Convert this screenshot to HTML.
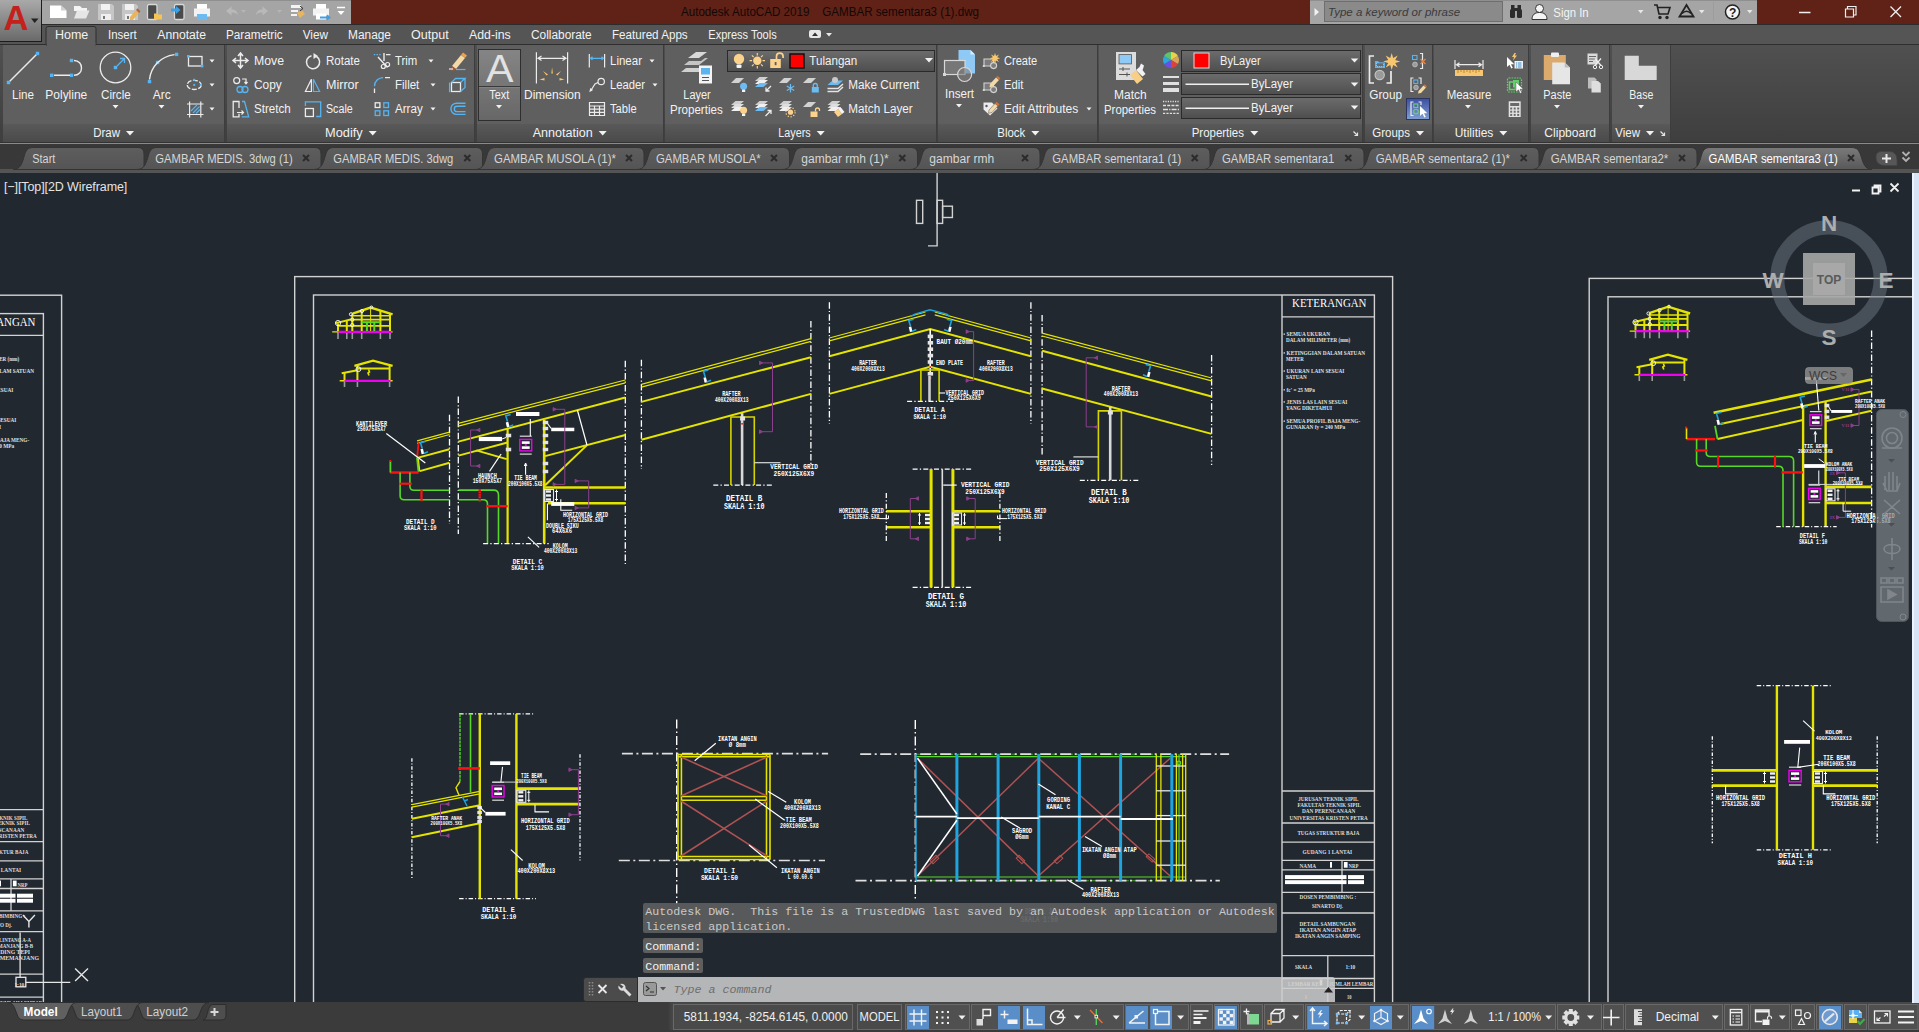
<!DOCTYPE html>
<html lang="en">
<head>
<meta charset="utf-8">
<title>Autodesk AutoCAD 2019 GAMBAR sementara3 (1).dwg</title>
<style>
*{box-sizing:border-box;margin:0;padding:0}
html,body{width:1919px;height:1032px;overflow:hidden;background:#212830}
body{position:relative;font-family:"Liberation Sans",sans-serif;font-size:12px;color:#e6e6e6}
.abs{position:absolute}
.t{position:absolute;white-space:nowrap;line-height:14px;height:14px;color:#f0f0f0;font-size:12.5px}
.tc{transform:translateX(-50%)}
#titlebar{position:absolute;left:0;top:0;width:1919px;height:25px;background:#602216;border-bottom:1px solid #2c2c2c}
#qat{position:absolute;left:42px;top:0;width:309px;height:24px;background:#a5a5a5;border-top:1px solid #8f8f8f}
#appbtn{position:absolute;left:0;top:0;width:42px;height:42px;background:linear-gradient(#a9a9a9,#6a6a6a);border:1px solid #1c1c1c;border-top:none;border-left:none}
#search{position:absolute;left:1310px;top:0;width:447px;height:24px;background:#a5a5a5;border-top:1px solid #8f8f8f}
#searchin{position:absolute;left:1324px;top:1px;width:179px;height:21px;background:#8a8a8a;border:1px solid #6e6e6e;color:#3a3a3a;font-style:italic;font-size:11.5px;line-height:21px;padding-left:3px}
#tabrow{position:absolute;left:0;top:25px;width:1919px;height:20px;background:#555}
#ribbon{position:absolute;left:0;top:44px;width:1919px;height:100px;background:linear-gradient(#505050,#3e3e3e);border-top:1px solid #2e2e2e}
.panel{position:absolute;top:45px;height:97px;background:#5f5f5f;border-right:1px solid #3d3d3d}
.ptitle{position:absolute;left:0;right:0;bottom:0;height:18px;background:linear-gradient(#595959,#4a4a4a)}
#ribbot{position:absolute;left:0;top:142px;width:1919px;height:5px;background:#383838;border-top:1px solid #333}#ribbot:after{content:'';position:absolute;left:0;top:0;width:1919px;height:1px;background:#8a8a8a}
#filetabs{position:absolute;left:0;top:145px;width:1919px;height:25px;background:#383838}
.ft{position:absolute;top:148px;height:20px;background:#535353;border-radius:9px 9px 0 0;transform:skewX(0deg)}
.ft.act{background:#616161}
#status{position:absolute;left:0;top:1002px;width:1919px;height:30px;background:linear-gradient(90deg,#3b3b3b 0,#3b3b3b 668px,#474747 672px);border-bottom:2px solid #3a3a3a}
.sb{position:absolute;top:1004px;height:26px;background:#4e4e4e;border:1px solid #2b2b2b}
.sbon{position:absolute;top:1006px;height:22px;background:#5b8fc7}
</style>
</head>
<body>
<div id="titlebar"></div>
<div id="qat"></div>
<div id="search"></div><div id="searchin">Type a keyword or phrase</div>
<div id="tabrow"></div>
<div id="ribbon"></div>
<div id="ribbot"></div>
<div id="filetabs"></div>
<div id="status"></div>
<div id="appbtn"></div>
<svg class="abs" style="left:0;top:173px" width="1919" height="829" viewBox="0 173 1919 829">
<style>.c{font-family:"Liberation Mono","DejaVu Sans Mono",monospace;font-weight:bold}.s{font-family:"Liberation Serif",serif;font-weight:bold}</style>
<g transform="translate(0 0)">
<rect x="294.7" y="276.6" width="1097.9" height="823.4" fill="none" stroke="#d2d2d2" stroke-width="1.4"/>
<rect x="313.5" y="295.0" width="1060.9" height="805.0" fill="none" stroke="#d2d2d2" stroke-width="1.4"/>
<path d="M1282.0 295.0L1282.0 1100.0" stroke="#d2d2d2" stroke-width="1.4" fill="none"/>
<path d="M1282.0 316.8L1374.4 316.8" stroke="#d2d2d2" stroke-width="1.3" fill="none"/>
<path d="M1282.0 791.0L1374.4 791.0" stroke="#d2d2d2" stroke-width="1.3" fill="none"/>
<path d="M1282.0 823.0L1374.4 823.0" stroke="#d2d2d2" stroke-width="1.3" fill="none"/>
<path d="M1282.0 842.2L1374.4 842.2" stroke="#d2d2d2" stroke-width="1.3" fill="none"/>
<path d="M1282.0 860.3L1374.4 860.3" stroke="#d2d2d2" stroke-width="1.3" fill="none"/>
<path d="M1282.0 869.9L1374.4 869.9" stroke="#d2d2d2" stroke-width="1.3" fill="none"/>
<path d="M1282.0 892.3L1374.4 892.3" stroke="#d2d2d2" stroke-width="1.3" fill="none"/>
<path d="M1282.0 913.0L1374.4 913.0" stroke="#d2d2d2" stroke-width="1.3" fill="none"/>
<path d="M1282.0 955.6L1374.4 955.6" stroke="#d2d2d2" stroke-width="1.3" fill="none"/>
<path d="M1282.0 978.5L1374.4 978.5" stroke="#d2d2d2" stroke-width="1.3" fill="none"/>
<path d="M1282.0 988.3L1374.4 988.3" stroke="#d2d2d2" stroke-width="1.3" fill="none"/>
<path d="M1342.0 860.3L1342.0 892.3" stroke="#d2d2d2" stroke-width="1.3" fill="none"/>
<path d="M1327.8 955.6L1327.8 1100.0" stroke="#d2d2d2" stroke-width="1.3" fill="none"/>
<text class="s" x="1292.1" y="307.2" font-size="12.5" textLength="74.4" lengthAdjust="spacingAndGlyphs" fill="#ffffff" style="font-weight:normal">KETERANGAN</text>
<text class="s" x="1286.6" y="336.1" font-size="5.6" textLength="43.4" lengthAdjust="spacingAndGlyphs" fill="#e0e0e0">SEMUA UKURAN</text>
<text class="s" x="1286.0" y="342.0" font-size="5.6" textLength="64.3" lengthAdjust="spacingAndGlyphs" fill="#e0e0e0">DALAM MILIMETER (mm)</text>
<text class="s" x="1286.6" y="354.9" font-size="5.6" textLength="78.4" lengthAdjust="spacingAndGlyphs" fill="#e0e0e0">KETINGGIAN DALAM SATUAN</text>
<text class="s" x="1286.0" y="361.2" font-size="5.6" textLength="17.9" lengthAdjust="spacingAndGlyphs" fill="#e0e0e0">METER</text>
<text class="s" x="1286.6" y="373.0" font-size="5.6" textLength="57.8" lengthAdjust="spacingAndGlyphs" fill="#e0e0e0">UKURAN LAIN SESUAI</text>
<text class="s" x="1286.0" y="379.2" font-size="5.6" textLength="20.8" lengthAdjust="spacingAndGlyphs" fill="#e0e0e0">SATUAN</text>
<text class="s" x="1286.6" y="391.8" font-size="5.6" textLength="28.3" lengthAdjust="spacingAndGlyphs" fill="#e0e0e0">fc' = 25 MPa</text>
<text class="s" x="1286.6" y="403.9" font-size="5.6" textLength="60.7" lengthAdjust="spacingAndGlyphs" fill="#e0e0e0">JENIS LAS LAIN SESUAI</text>
<text class="s" x="1286.0" y="410.2" font-size="5.6" textLength="45.9" lengthAdjust="spacingAndGlyphs" fill="#e0e0e0">YANG DIKETAHUI</text>
<text class="s" x="1286.6" y="423.1" font-size="5.6" textLength="73.6" lengthAdjust="spacingAndGlyphs" fill="#e0e0e0">SEMUA PROFIL BAJA MENG-</text>
<text class="s" x="1286.0" y="429.0" font-size="5.6" textLength="59.1" lengthAdjust="spacingAndGlyphs" fill="#e0e0e0">GUNAKAN fy = 240 MPa</text>
<rect x="1283.5" y="333.5" width="1.5" height="1.3" fill="#cfcfcf"/>
<rect x="1283.5" y="352.3" width="1.5" height="1.3" fill="#cfcfcf"/>
<rect x="1283.5" y="370.4" width="1.5" height="1.3" fill="#cfcfcf"/>
<rect x="1283.5" y="389.2" width="1.5" height="1.3" fill="#cfcfcf"/>
<rect x="1283.5" y="401.3" width="1.5" height="1.3" fill="#cfcfcf"/>
<rect x="1283.5" y="420.5" width="1.5" height="1.3" fill="#cfcfcf"/>
<text class="s" x="1298.3" y="801.0" font-size="5.4" textLength="60.1" lengthAdjust="spacingAndGlyphs" fill="#dedede">JURUSAN TEKNIK SIPIL</text>
<text class="s" x="1297.4" y="806.9" font-size="5.4" textLength="63.5" lengthAdjust="spacingAndGlyphs" fill="#dedede">FAKULTAS TEKNIK SIPIL</text>
<text class="s" x="1302.0" y="813.1" font-size="5.4" textLength="53.3" lengthAdjust="spacingAndGlyphs" fill="#dedede">DAN PERENCANAAN</text>
<text class="s" x="1289.6" y="819.7" font-size="5.4" textLength="78.2" lengthAdjust="spacingAndGlyphs" fill="#dedede">UNIVERSITAS KRISTEN PETRA</text>
<text class="s" x="1297.4" y="835.2" font-size="5.4" textLength="62.0" lengthAdjust="spacingAndGlyphs" fill="#dedede">TUGAS STRUKTUR BAJA</text>
<text class="s" x="1302.6" y="853.8" font-size="5.4" textLength="49.6" lengthAdjust="spacingAndGlyphs" fill="#dedede">GUDANG 1 LANTAI</text>
<text class="s" x="1299.5" y="868.0" font-size="5.4" textLength="16.5" lengthAdjust="spacingAndGlyphs" fill="#dedede">NAMA</text>
<text class="s" x="1348.5" y="868.0" font-size="5.4" textLength="9.9" lengthAdjust="spacingAndGlyphs" fill="#dedede">NRP</text>
<text class="s" x="1299.5" y="899.0" font-size="5.4" textLength="56.8" lengthAdjust="spacingAndGlyphs" fill="#dedede">DOSEN PEMBIMBING :</text>
<text class="s" x="1311.9" y="908.0" font-size="5.4" textLength="31.1" lengthAdjust="spacingAndGlyphs" fill="#dedede">SINARTO Dj.</text>
<text class="s" x="1299.5" y="926.0" font-size="5.4" textLength="55.8" lengthAdjust="spacingAndGlyphs" fill="#dedede">DETAIL SAMBUNGAN</text>
<text class="s" x="1299.5" y="932.2" font-size="5.4" textLength="56.8" lengthAdjust="spacingAndGlyphs" fill="#dedede">IKATAN ANGIN ATAP</text>
<text class="s" x="1294.9" y="938.1" font-size="5.4" textLength="65.4" lengthAdjust="spacingAndGlyphs" fill="#dedede">IKATAN ANGIN SAMPING</text>
<text class="s" x="1294.9" y="968.8" font-size="5.4" textLength="17.3" lengthAdjust="spacingAndGlyphs" fill="#dedede">SKALA</text>
<text class="s" x="1345.4" y="968.8" font-size="5.4" textLength="9.9" lengthAdjust="spacingAndGlyphs" fill="#dedede">1:10</text>
<text class="s" x="1288.0" y="986.1" font-size="5.4" textLength="31.0" lengthAdjust="spacingAndGlyphs" fill="#dedede">LEMBAR KE</text>
<text class="s" x="1329.3" y="986.1" font-size="5.4" textLength="44.0" lengthAdjust="spacingAndGlyphs" fill="#dedede">JUMLAH LEMBAR</text>
<text class="s" x="1305.0" y="998.9" font-size="5.4" textLength="2.0" lengthAdjust="spacingAndGlyphs" fill="#dedede">1</text>
<text class="s" x="1347.0" y="998.9" font-size="5.4" textLength="4.5" lengthAdjust="spacingAndGlyphs" fill="#dedede">10</text>
<rect x="1285.0" y="875.1" width="61.5" height="4.0" fill="#ffffff"/>
<rect x="1348.0" y="875.1" width="16.0" height="4.0" fill="#ffffff"/>
<rect x="1285.0" y="880.2" width="61.5" height="3.9" fill="#ffffff"/>
<rect x="1348.0" y="880.2" width="16.0" height="3.9" fill="#ffffff"/>
<rect x="1330.0" y="862.0" width="2.0" height="5.7" fill="#ffffff"/>
<rect x="1343.9" y="862.0" width="3.7" height="5.7" fill="#ffffff"/>
<rect x="1319.7" y="979.6" width="2.6" height="5.9" fill="#ffffff"/>
</g>
<g transform="translate(-1331 18.6)">
<rect x="294.7" y="276.6" width="1097.9" height="823.4" fill="none" stroke="#d2d2d2" stroke-width="1.4"/>
<rect x="313.5" y="295.0" width="1060.9" height="805.0" fill="none" stroke="#d2d2d2" stroke-width="1.4"/>
<path d="M1282.0 295.0L1282.0 1100.0" stroke="#d2d2d2" stroke-width="1.4" fill="none"/>
<path d="M1282.0 316.8L1374.4 316.8" stroke="#d2d2d2" stroke-width="1.3" fill="none"/>
<path d="M1282.0 791.0L1374.4 791.0" stroke="#d2d2d2" stroke-width="1.3" fill="none"/>
<path d="M1282.0 823.0L1374.4 823.0" stroke="#d2d2d2" stroke-width="1.3" fill="none"/>
<path d="M1282.0 842.2L1374.4 842.2" stroke="#d2d2d2" stroke-width="1.3" fill="none"/>
<path d="M1282.0 860.3L1374.4 860.3" stroke="#d2d2d2" stroke-width="1.3" fill="none"/>
<path d="M1282.0 869.9L1374.4 869.9" stroke="#d2d2d2" stroke-width="1.3" fill="none"/>
<path d="M1282.0 892.3L1374.4 892.3" stroke="#d2d2d2" stroke-width="1.3" fill="none"/>
<path d="M1282.0 913.0L1374.4 913.0" stroke="#d2d2d2" stroke-width="1.3" fill="none"/>
<path d="M1282.0 955.6L1374.4 955.6" stroke="#d2d2d2" stroke-width="1.3" fill="none"/>
<path d="M1282.0 978.5L1374.4 978.5" stroke="#d2d2d2" stroke-width="1.3" fill="none"/>
<path d="M1282.0 988.3L1374.4 988.3" stroke="#d2d2d2" stroke-width="1.3" fill="none"/>
<path d="M1342.0 860.3L1342.0 892.3" stroke="#d2d2d2" stroke-width="1.3" fill="none"/>
<path d="M1327.8 955.6L1327.8 1100.0" stroke="#d2d2d2" stroke-width="1.3" fill="none"/>
<text class="s" x="1292.1" y="307.2" font-size="12.5" textLength="74.4" lengthAdjust="spacingAndGlyphs" fill="#ffffff" style="font-weight:normal">KETERANGAN</text>
<text class="s" x="1286.6" y="336.1" font-size="5.6" textLength="43.4" lengthAdjust="spacingAndGlyphs" fill="#e0e0e0">SEMUA UKURAN</text>
<text class="s" x="1286.0" y="342.0" font-size="5.6" textLength="64.3" lengthAdjust="spacingAndGlyphs" fill="#e0e0e0">DALAM MILIMETER (mm)</text>
<text class="s" x="1286.6" y="354.9" font-size="5.6" textLength="78.4" lengthAdjust="spacingAndGlyphs" fill="#e0e0e0">KETINGGIAN DALAM SATUAN</text>
<text class="s" x="1286.0" y="361.2" font-size="5.6" textLength="17.9" lengthAdjust="spacingAndGlyphs" fill="#e0e0e0">METER</text>
<text class="s" x="1286.6" y="373.0" font-size="5.6" textLength="57.8" lengthAdjust="spacingAndGlyphs" fill="#e0e0e0">UKURAN LAIN SESUAI</text>
<text class="s" x="1286.0" y="379.2" font-size="5.6" textLength="20.8" lengthAdjust="spacingAndGlyphs" fill="#e0e0e0">SATUAN</text>
<text class="s" x="1286.6" y="391.8" font-size="5.6" textLength="28.3" lengthAdjust="spacingAndGlyphs" fill="#e0e0e0">fc' = 25 MPa</text>
<text class="s" x="1286.6" y="403.9" font-size="5.6" textLength="60.7" lengthAdjust="spacingAndGlyphs" fill="#e0e0e0">JENIS LAS LAIN SESUAI</text>
<text class="s" x="1286.0" y="410.2" font-size="5.6" textLength="45.9" lengthAdjust="spacingAndGlyphs" fill="#e0e0e0">YANG DIKETAHUI</text>
<text class="s" x="1286.6" y="423.1" font-size="5.6" textLength="73.6" lengthAdjust="spacingAndGlyphs" fill="#e0e0e0">SEMUA PROFIL BAJA MENG-</text>
<text class="s" x="1286.0" y="429.0" font-size="5.6" textLength="59.1" lengthAdjust="spacingAndGlyphs" fill="#e0e0e0">GUNAKAN fy = 240 MPa</text>
<rect x="1283.5" y="333.5" width="1.5" height="1.3" fill="#cfcfcf"/>
<rect x="1283.5" y="352.3" width="1.5" height="1.3" fill="#cfcfcf"/>
<rect x="1283.5" y="370.4" width="1.5" height="1.3" fill="#cfcfcf"/>
<rect x="1283.5" y="389.2" width="1.5" height="1.3" fill="#cfcfcf"/>
<rect x="1283.5" y="401.3" width="1.5" height="1.3" fill="#cfcfcf"/>
<rect x="1283.5" y="420.5" width="1.5" height="1.3" fill="#cfcfcf"/>
<text class="s" x="1298.3" y="801.0" font-size="5.4" textLength="60.1" lengthAdjust="spacingAndGlyphs" fill="#dedede">JURUSAN TEKNIK SIPIL</text>
<text class="s" x="1297.4" y="806.9" font-size="5.4" textLength="63.5" lengthAdjust="spacingAndGlyphs" fill="#dedede">FAKULTAS TEKNIK SIPIL</text>
<text class="s" x="1302.0" y="813.1" font-size="5.4" textLength="53.3" lengthAdjust="spacingAndGlyphs" fill="#dedede">DAN PERENCANAAN</text>
<text class="s" x="1289.6" y="819.7" font-size="5.4" textLength="78.2" lengthAdjust="spacingAndGlyphs" fill="#dedede">UNIVERSITAS KRISTEN PETRA</text>
<text class="s" x="1297.4" y="835.2" font-size="5.4" textLength="62.0" lengthAdjust="spacingAndGlyphs" fill="#dedede">TUGAS STRUKTUR BAJA</text>
<text class="s" x="1302.6" y="853.8" font-size="5.4" textLength="49.6" lengthAdjust="spacingAndGlyphs" fill="#dedede">GUDANG 1 LANTAI</text>
<text class="s" x="1299.5" y="868.0" font-size="5.4" textLength="16.5" lengthAdjust="spacingAndGlyphs" fill="#dedede">NAMA</text>
<text class="s" x="1348.5" y="868.0" font-size="5.4" textLength="9.9" lengthAdjust="spacingAndGlyphs" fill="#dedede">NRP</text>
<text class="s" x="1299.5" y="899.0" font-size="5.4" textLength="56.8" lengthAdjust="spacingAndGlyphs" fill="#dedede">DOSEN PEMBIMBING :</text>
<text class="s" x="1311.9" y="908.0" font-size="5.4" textLength="31.1" lengthAdjust="spacingAndGlyphs" fill="#dedede">SINARTO Dj.</text>
<text class="s" x="1293.0" y="923.4" font-size="5.4" textLength="69.0" lengthAdjust="spacingAndGlyphs" fill="#dedede">POTONGAN MELINTANG A-A</text>
<text class="s" x="1291.0" y="929.4" font-size="5.4" textLength="73.0" lengthAdjust="spacingAndGlyphs" fill="#dedede">POTONGAN MEMANJANG B-B</text>
<text class="s" x="1297.0" y="935.4" font-size="5.4" textLength="64.0" lengthAdjust="spacingAndGlyphs" fill="#dedede">IKATAN DINDING TEPI</text>
<text class="s" x="1286.0" y="941.4" font-size="5.4" textLength="84.0" lengthAdjust="spacingAndGlyphs" fill="#dedede">IKATAN ANGIN MEMANJANG</text>
<text class="s" x="1294.9" y="968.8" font-size="5.4" textLength="17.3" lengthAdjust="spacingAndGlyphs" fill="#dedede">SKALA</text>
<text class="s" x="1345.4" y="968.8" font-size="5.4" textLength="9.9" lengthAdjust="spacingAndGlyphs" fill="#dedede">1:10</text>
<text class="s" x="1288.0" y="986.1" font-size="5.4" textLength="31.0" lengthAdjust="spacingAndGlyphs" fill="#dedede">LEMBAR KE</text>
<text class="s" x="1329.3" y="986.1" font-size="5.4" textLength="44.0" lengthAdjust="spacingAndGlyphs" fill="#dedede">JUMLAH LEMBAR</text>
<text class="s" x="1305.0" y="998.9" font-size="5.4" textLength="2.0" lengthAdjust="spacingAndGlyphs" fill="#dedede">1</text>
<text class="s" x="1347.0" y="998.9" font-size="5.4" textLength="4.5" lengthAdjust="spacingAndGlyphs" fill="#dedede">10</text>
<rect x="1285.0" y="875.1" width="61.5" height="4.0" fill="#ffffff"/>
<rect x="1348.0" y="875.1" width="16.0" height="4.0" fill="#ffffff"/>
<rect x="1285.0" y="880.2" width="61.5" height="3.9" fill="#ffffff"/>
<rect x="1348.0" y="880.2" width="16.0" height="3.9" fill="#ffffff"/>
<rect x="1330.0" y="862.0" width="2.0" height="5.7" fill="#ffffff"/>
<rect x="1343.9" y="862.0" width="3.7" height="5.7" fill="#ffffff"/>
<rect x="1319.7" y="979.6" width="2.6" height="5.9" fill="#ffffff"/>
</g>
<g transform="translate(1294.5 1.8)">
<rect x="294.7" y="276.6" width="1097.9" height="823.4" fill="none" stroke="#d2d2d2" stroke-width="1.4"/>
<rect x="313.5" y="295.0" width="1060.9" height="805.0" fill="none" stroke="#d2d2d2" stroke-width="1.4"/>
</g>
<path d="M937.1 173.0L937.1 245.9L928.0 245.9" stroke="#d2d2d2" stroke-width="1.4" fill="none"/>
<rect x="916.5" y="200.3" width="6.2" height="23.1" fill="none" stroke="#d2d2d2" stroke-width="1.4"/>
<rect x="937.1" y="200.3" width="5.5" height="23.1" fill="none" stroke="#d2d2d2" stroke-width="1.4"/>
<rect x="942.6" y="206.2" width="9.8" height="11.3" fill="none" stroke="#d2d2d2" stroke-width="1.4"/>
<g transform="translate(0 0)">
<path d="M338.0 332.0L338.0 339.0" stroke="#9a9a9a" stroke-width="1.6" fill="none"/>
<path d="M346.8 332.0L346.8 339.0" stroke="#9a9a9a" stroke-width="1.6" fill="none"/>
<path d="M352.3 332.0L352.3 339.0" stroke="#9a9a9a" stroke-width="1.6" fill="none"/>
<path d="M361.7 332.0L361.7 339.0" stroke="#9a9a9a" stroke-width="1.6" fill="none"/>
<path d="M380.4 332.0L380.4 339.0" stroke="#9a9a9a" stroke-width="1.6" fill="none"/>
<path d="M390.0 332.0L390.0 339.0" stroke="#9a9a9a" stroke-width="1.6" fill="none"/>
<path d="M332.2 331.9L392.6 331.9" stroke="#e4e400" stroke-width="1.4" fill="none"/>
<path d="M338.4 331.9L391.3 331.9" stroke="#f000f0" stroke-width="2.2" fill="none"/>
<path d="M338.0 323.5L338.0 331.0" stroke="#e4e400" stroke-width="2" fill="none"/>
<path d="M346.8 321.0L346.8 331.0" stroke="#e4e400" stroke-width="2" fill="none"/>
<path d="M352.3 313.6L352.3 331.0" stroke="#e4e400" stroke-width="2" fill="none"/>
<path d="M361.7 311.0L361.7 331.0" stroke="#e4e400" stroke-width="2" fill="none"/>
<path d="M380.4 311.0L380.4 331.0" stroke="#e4e400" stroke-width="2" fill="none"/>
<path d="M390.0 314.0L390.0 331.0" stroke="#e4e400" stroke-width="2" fill="none"/>
<path d="M352.6 313.6L370.6 307.5L392.6 314.3" stroke="#e4e400" stroke-width="2.4" fill="none"/>
<path d="M352.0 315.8L390.0 315.8" stroke="#e4e400" stroke-width="1.6" fill="none"/>
<path d="M352.0 319.7L390.0 319.7" stroke="#e4e400" stroke-width="1.8" fill="none"/>
<path d="M338.0 325.8L390.0 325.8" stroke="#e4e400" stroke-width="1.8" fill="none"/>
<path d="M335.9 323.1L352.6 319.0" stroke="#e4e400" stroke-width="2" fill="none"/>
<path d="M370.6 308.0L370.6 331.0" stroke="#e4e400" stroke-width="1" fill="none"/>
<path d="M361.4 322.2L380.4 322.2" stroke="#58d826" stroke-width="2" fill="none"/>
<path d="M366.9 322.2L366.9 331.0" stroke="#58d826" stroke-width="2" fill="none"/>
<path d="M374.3 322.2L374.3 331.0" stroke="#58d826" stroke-width="2" fill="none"/>
<circle cx="338" cy="323.1" r="2.6" fill="none" stroke="#f4f4f4" stroke-width="1"/>
<circle cx="351" cy="314.3" r="1.6" fill="none" stroke="#f4f4f4" stroke-width="1"/>
<circle cx="352.3" cy="319.7" r="1.6" fill="none" stroke="#f4f4f4" stroke-width="1"/>
<circle cx="352.3" cy="325" r="1.6" fill="none" stroke="#f4f4f4" stroke-width="1"/>
<circle cx="362" cy="311" r="1.6" fill="none" stroke="#f4f4f4" stroke-width="1"/>
<circle cx="371.5" cy="307.3" r="1.3" fill="none" stroke="#f4f4f4" stroke-width="1"/>
</g>
<g transform="translate(0 0)">
<path d="M344.5 381.0L344.5 387.0" stroke="#9a9a9a" stroke-width="1.6" fill="none"/>
<path d="M357.4 381.0L357.4 387.0" stroke="#9a9a9a" stroke-width="1.6" fill="none"/>
<path d="M389.6 381.0L389.6 387.0" stroke="#9a9a9a" stroke-width="1.6" fill="none"/>
<path d="M339.7 380.8L392.6 380.8" stroke="#e4e400" stroke-width="1.4" fill="none"/>
<path d="M344.5 380.8L390.5 380.8" stroke="#f000f0" stroke-width="2.2" fill="none"/>
<path d="M344.5 373.0L344.5 380.0" stroke="#e4e400" stroke-width="2" fill="none"/>
<path d="M357.4 366.0L357.4 380.0" stroke="#e4e400" stroke-width="2" fill="none"/>
<path d="M389.6 366.0L389.6 380.0" stroke="#e4e400" stroke-width="2" fill="none"/>
<path d="M354.4 365.8L373.0 360.7L392.6 365.8" stroke="#e4e400" stroke-width="2.4" fill="none"/>
<path d="M357.0 368.6L390.0 368.6" stroke="#e4e400" stroke-width="2" fill="none"/>
<path d="M341.7 373.3L357.4 370.2" stroke="#e4e400" stroke-width="2" fill="none"/>
<path d="M368.5 369.5L369.5 372.0L368.0 373.0L369.0 375.5" stroke="#e4e400" stroke-width="1.6" fill="none"/>
<circle cx="358.400" cy="369.200" r="2.400" fill="none" stroke="#f4f4f4" stroke-width="1"/>
</g>
<g transform="translate(1297.5 -0.8)">
<path d="M338.0 332.0L338.0 339.0" stroke="#9a9a9a" stroke-width="1.6" fill="none"/>
<path d="M346.8 332.0L346.8 339.0" stroke="#9a9a9a" stroke-width="1.6" fill="none"/>
<path d="M352.3 332.0L352.3 339.0" stroke="#9a9a9a" stroke-width="1.6" fill="none"/>
<path d="M361.7 332.0L361.7 339.0" stroke="#9a9a9a" stroke-width="1.6" fill="none"/>
<path d="M380.4 332.0L380.4 339.0" stroke="#9a9a9a" stroke-width="1.6" fill="none"/>
<path d="M390.0 332.0L390.0 339.0" stroke="#9a9a9a" stroke-width="1.6" fill="none"/>
<path d="M332.2 331.9L392.6 331.9" stroke="#e4e400" stroke-width="1.4" fill="none"/>
<path d="M338.4 331.9L391.3 331.9" stroke="#f000f0" stroke-width="2.2" fill="none"/>
<path d="M338.0 323.5L338.0 331.0" stroke="#e4e400" stroke-width="2" fill="none"/>
<path d="M346.8 321.0L346.8 331.0" stroke="#e4e400" stroke-width="2" fill="none"/>
<path d="M352.3 313.6L352.3 331.0" stroke="#e4e400" stroke-width="2" fill="none"/>
<path d="M361.7 311.0L361.7 331.0" stroke="#e4e400" stroke-width="2" fill="none"/>
<path d="M380.4 311.0L380.4 331.0" stroke="#e4e400" stroke-width="2" fill="none"/>
<path d="M390.0 314.0L390.0 331.0" stroke="#e4e400" stroke-width="2" fill="none"/>
<path d="M352.6 313.6L370.6 307.5L392.6 314.3" stroke="#e4e400" stroke-width="2.4" fill="none"/>
<path d="M352.0 315.8L390.0 315.8" stroke="#e4e400" stroke-width="1.6" fill="none"/>
<path d="M352.0 319.7L390.0 319.7" stroke="#e4e400" stroke-width="1.8" fill="none"/>
<path d="M338.0 325.8L390.0 325.8" stroke="#e4e400" stroke-width="1.8" fill="none"/>
<path d="M335.9 323.1L352.6 319.0" stroke="#e4e400" stroke-width="2" fill="none"/>
<path d="M370.6 308.0L370.6 331.0" stroke="#e4e400" stroke-width="1" fill="none"/>
<path d="M361.4 322.2L380.4 322.2" stroke="#58d826" stroke-width="2" fill="none"/>
<path d="M366.9 322.2L366.9 331.0" stroke="#58d826" stroke-width="2" fill="none"/>
<path d="M374.3 322.2L374.3 331.0" stroke="#58d826" stroke-width="2" fill="none"/>
<circle cx="338" cy="323.1" r="2.6" fill="none" stroke="#f4f4f4" stroke-width="1"/>
<circle cx="351" cy="314.3" r="1.6" fill="none" stroke="#f4f4f4" stroke-width="1"/>
<circle cx="352.3" cy="319.7" r="1.6" fill="none" stroke="#f4f4f4" stroke-width="1"/>
<circle cx="352.3" cy="325" r="1.6" fill="none" stroke="#f4f4f4" stroke-width="1"/>
<circle cx="362" cy="311" r="1.6" fill="none" stroke="#f4f4f4" stroke-width="1"/>
<circle cx="371.5" cy="307.3" r="1.3" fill="none" stroke="#f4f4f4" stroke-width="1"/>
</g>
<g transform="translate(1294.8 -6)">
<path d="M344.5 381.0L344.5 387.0" stroke="#9a9a9a" stroke-width="1.6" fill="none"/>
<path d="M357.4 381.0L357.4 387.0" stroke="#9a9a9a" stroke-width="1.6" fill="none"/>
<path d="M389.6 381.0L389.6 387.0" stroke="#9a9a9a" stroke-width="1.6" fill="none"/>
<path d="M339.7 380.8L392.6 380.8" stroke="#e4e400" stroke-width="1.4" fill="none"/>
<path d="M344.5 380.8L390.5 380.8" stroke="#f000f0" stroke-width="2.2" fill="none"/>
<path d="M344.5 373.0L344.5 380.0" stroke="#e4e400" stroke-width="2" fill="none"/>
<path d="M357.4 366.0L357.4 380.0" stroke="#e4e400" stroke-width="2" fill="none"/>
<path d="M389.6 366.0L389.6 380.0" stroke="#e4e400" stroke-width="2" fill="none"/>
<path d="M354.4 365.8L373.0 360.7L392.6 365.8" stroke="#e4e400" stroke-width="2.4" fill="none"/>
<path d="M357.0 368.6L390.0 368.6" stroke="#e4e400" stroke-width="2" fill="none"/>
<path d="M341.7 373.3L357.4 370.2" stroke="#e4e400" stroke-width="2" fill="none"/>
<path d="M368.5 369.5L369.5 372.0L368.0 373.0L369.0 375.5" stroke="#e4e400" stroke-width="1.6" fill="none"/>
<circle cx="358.400" cy="369.200" r="2.400" fill="none" stroke="#f4f4f4" stroke-width="1"/>
</g>
<path d="M449.5 414.7L449.5 523.7" stroke="#ffffff" stroke-width="1.3" stroke-dasharray="6.5 2.2 1.2 2.2" fill="none"/>
<path d="M458.3 396.5L458.3 534.0" stroke="#ffffff" stroke-width="1.3" stroke-dasharray="6.5 2.2 1.2 2.2" fill="none"/>
<path d="M417.1 440.9L449.5 432.1" stroke="#e4e400" stroke-width="1.2" fill="none"/>
<path d="M417.1 443.3L449.5 434.5" stroke="#e4e400" stroke-width="1.2" fill="none"/>
<path d="M418.3 457.6L449.5 449.3" stroke="#e4e400" stroke-width="2" fill="none"/>
<path d="M419.8 471.1L449.5 462.7" stroke="#e4e400" stroke-width="2" fill="none"/>
<path d="M418.6 442.3L417.1 457.6" stroke="#ff1010" stroke-width="1.8" fill="none"/>
<path d="M417.1 457.6L418.6 472.1" stroke="#58d826" stroke-width="2" fill="none"/>
<path d="M418.3 459.0L419.8 471.1" stroke="#e4e400" stroke-width="1.2" fill="none"/>
<path d="M425.3 441.5L420.5 442.8L422.2 448.5" stroke="#1ea4de" stroke-width="1.6" fill="none"/>
<path d="M421.7 449.0L422.9 454.0" stroke="#ffffff" stroke-width="2.6" fill="none"/>
<path d="M423.7 453.5L428.0 451.8" stroke="#1ea4de" stroke-width="1.5" fill="none"/>
<path d="M390.0 472.5L418.6 472.5" stroke="#ff1010" stroke-width="2.4" fill="none"/>
<path d="M390.4 461.2L390.4 472.5" stroke="#58d826" stroke-width="1.8" fill="none"/>
<rect x="389.2" y="460.0" width="2.0" height="2.0" fill="#ff1010"/>
<path d="M400.100 472.500V495.700Q400.100 499.700 404.100 499.700H449.500" stroke="#58d826" stroke-width="1.6" fill="none"/>
<path d="M409.900 472.500V486.300Q409.900 490.300 413.900 490.300H449.500" stroke="#58d826" stroke-width="1.6" fill="none"/>
<path d="M399.4 483.7L411.8 483.7" stroke="#ff1010" stroke-width="2.2" fill="none"/>
<path d="M421.5 489.5L421.5 501.2" stroke="#ff1010" stroke-width="2.2" fill="none"/>
<text class="c" x="356.1" y="425.6" font-size="7" textLength="30.9" lengthAdjust="spacingAndGlyphs" fill="#ffffff">KANTILEVER</text>
<text class="c" x="357.0" y="430.9" font-size="7" textLength="29.0" lengthAdjust="spacingAndGlyphs" fill="#ffffff">250X75X5X7</text>
<path d="M386.3 433.6L425.3 463.1" stroke="#ffffff" stroke-width="1.2" fill="none"/>
<text class="c" x="406.0" y="523.7" font-size="8" textLength="28.7" lengthAdjust="spacingAndGlyphs" fill="#ffffff">DETAIL D</text>
<text class="c" x="404.0" y="530.4" font-size="8" textLength="32.5" lengthAdjust="spacingAndGlyphs" fill="#ffffff">SKALA 1:10</text>
<path d="M625.3 360.8L625.3 564.0" stroke="#ffffff" stroke-width="1.3" stroke-dasharray="6.5 2.2 1.2 2.2" fill="none"/>
<path d="M458.4 423.3L625.3 380.0" stroke="#e4e400" stroke-width="1.2" fill="none"/>
<path d="M458.4 426.1L625.3 382.8" stroke="#e4e400" stroke-width="1.2" fill="none"/>
<path d="M458.4 441.6L625.3 397.5" stroke="#e4e400" stroke-width="2" fill="none"/>
<path d="M458.4 455.6L507.6 442.5" stroke="#e4e400" stroke-width="2" fill="none"/>
<path d="M545.1 456.1L625.3 435.0" stroke="#e4e400" stroke-width="2" fill="none"/>
<path d="M507.6 428.5L507.6 543.6" stroke="#e4e400" stroke-width="2.2" fill="none"/>
<path d="M544.2 419.8L544.2 543.6" stroke="#e4e400" stroke-width="2.6" fill="none"/>
<path d="M476.2 450.4L506.7 459.1" stroke="#e4e400" stroke-width="2" fill="none"/>
<path d="M545.1 485.3L587.0 445.1" stroke="#e4e400" stroke-width="2" fill="none"/>
<path d="M577.4 410.2L587.0 445.1" stroke="#ffffff" stroke-width="1.3" fill="none"/>
<path d="M545.1 487.5L625.3 487.5" stroke="#e4e400" stroke-width="2.6" fill="none"/>
<path d="M548.0 503.2L625.3 503.2" stroke="#e4e400" stroke-width="2.6" fill="none"/>
<rect x="519.8" y="439.4" width="11.9" height="11.5" fill="none" stroke="#f000f0" stroke-width="1.4"/>
<rect x="521.8" y="441.3" width="7.9" height="2.6" fill="#ffffff"/>
<rect x="521.8" y="446.3" width="7.9" height="2.6" fill="#ffffff"/>
<rect x="524.9" y="444.1" width="1.8" height="2.0" fill="#f000f0"/>
<path d="M519.8 436.2L531.7 436.2" stroke="#dcdcdc" stroke-width="1.2" fill="none"/>
<path d="M519.8 454.1L531.7 454.1" stroke="#dcdcdc" stroke-width="1.2" fill="none"/>
<rect x="516.0" y="412.0" width="23.4" height="4.0" fill="#ffffff"/>
<rect x="478.8" y="436.9" width="23.2" height="4.2" fill="#ffffff"/>
<rect x="551.2" y="427.7" width="23.1" height="3.5" fill="#ffffff"/>
<rect x="551.2" y="502.2" width="23.1" height="3.7" fill="#ffffff"/>
<path d="M530.3 418.9L530.3 436.0" stroke="#ffffff" stroke-width="1.1" fill="none"/>
<path d="M525.6 463.4L525.6 474.8" stroke="#ffffff" stroke-width="1.1" fill="none"/>
<path d="M524.300 466l1.300 -3l1.300 3" stroke="#ffffff" stroke-width="1" fill="none"/>
<path d="M546.0 421.5L551.2 428.5" stroke="#ffffff" stroke-width="1.1" fill="none"/>
<path d="M502.0 439.0L506.0 437.5" stroke="#ffffff" stroke-width="1" fill="none"/>
<rect x="542.8" y="420.8" width="5.4" height="3.4" fill="#e4e4e4"/>
<rect x="542.8" y="426.8" width="5.4" height="3.4" fill="#e4e4e4"/>
<rect x="542.8" y="433.8" width="5.4" height="3.4" fill="#e4e4e4"/>
<rect x="542.8" y="440.8" width="5.4" height="3.4" fill="#e4e4e4"/>
<rect x="542.8" y="447.8" width="5.4" height="3.4" fill="#e4e4e4"/>
<rect x="542.8" y="461.8" width="5.4" height="3.4" fill="#e4e4e4"/>
<rect x="542.8" y="469.8" width="5.4" height="3.4" fill="#e4e4e4"/>
<rect x="505.8" y="433.7" width="5.4" height="3.6" fill="#e4e4e4"/>
<rect x="505.8" y="447.7" width="5.4" height="3.6" fill="#e4e4e4"/>
<path d="M510.6 414.6L505.8 415.9L507.5 421.6" stroke="#1ea4de" stroke-width="1.6" fill="none"/>
<path d="M507.0 422.1L508.2 427.1" stroke="#ffffff" stroke-width="2.6" fill="none"/>
<path d="M509.0 426.6L513.3 424.9" stroke="#1ea4de" stroke-width="1.5" fill="none"/>
<path d="M479.7 430.0L470.6 430.0L470.6 466.0L479.7 466.0" stroke="#8c3f8c" stroke-width="1" fill="none"/>
<path d="M479.7 428.0v4M476.7 430.0l3 -1.500v3z" stroke="#8c3f8c" stroke-width="1" fill="#8c3f8c"/>
<path d="M479.7 464.0v4M476.7 466.0l3 -1.500v3z" stroke="#8c3f8c" stroke-width="1" fill="#8c3f8c"/>
<path d="M553.3 409.3L564.8 409.3L564.8 484.4L553.3 484.4" stroke="#8c3f8c" stroke-width="1" fill="none"/>
<path d="M553.3 407.3v4M556.3 409.3l-3 -1.500v3z" stroke="#8c3f8c" stroke-width="1" fill="#8c3f8c"/>
<path d="M553.3 482.4v4M556.3 484.4l-3 -1.500v3z" stroke="#8c3f8c" stroke-width="1" fill="#8c3f8c"/>
<path d="M575.3 480.9L588.7 480.9L588.7 507.9L575.3 507.9" stroke="#8c3f8c" stroke-width="1" fill="none"/>
<path d="M575.3 478.9v4M578.3 480.9l-3 -1.500v3z" stroke="#8c3f8c" stroke-width="1" fill="#8c3f8c"/>
<path d="M575.3 505.9v4M578.3 507.9l-3 -1.500v3z" stroke="#8c3f8c" stroke-width="1" fill="#8c3f8c"/>
<rect x="544.5" y="489.5" width="9.0" height="12.0" fill="none" stroke="#e8e8e8" stroke-width="1.1"/>
<rect x="546.0" y="490.3" width="5.0" height="2.4" fill="#f0f0f0"/>
<rect x="546.0" y="494.3" width="5.0" height="2.4" fill="#f0f0f0"/>
<rect x="546.0" y="498.3" width="5.0" height="2.4" fill="#f0f0f0"/>
<path d="M556.5 489.5v12M555.0 491.5h3M555.0 499.5h3" stroke="#ffffff" stroke-width="1" fill="none"/>
<path d="M560.8 499.2L560.8 510.2L572.2 510.2" stroke="#ffffff" stroke-width="1.1" fill="none"/>
<path d="M547.4 503.6L547.4 520.2" stroke="#ffffff" stroke-width="1.1" fill="none"/>
<path d="M458.400 490.100H493.600Q498.500 490.100 498.500 495V543.600" stroke="#58d826" stroke-width="1.6" fill="none"/>
<path d="M458.400 499.700H483.200Q487.500 499.700 487.500 504V543.600" stroke="#58d826" stroke-width="1.6" fill="none"/>
<path d="M479.7 489.1L479.7 501.5" stroke="#ff1010" stroke-width="2.4" fill="none" stroke-dasharray="1.8 .6"/>
<path d="M486.3 506.2L507.6 506.2" stroke="#ff1010" stroke-width="2.4" fill="none"/>
<path d="M483.1 543.6L548.7 543.6" stroke="#ffffff" stroke-width="1.3" stroke-dasharray="5 2.2 1.3 2.2" fill="none"/>
<text class="c" x="477.9" y="477.8" font-size="7" textLength="18.9" lengthAdjust="spacingAndGlyphs" fill="#ffffff">HAUNCH</text>
<text class="c" x="472.7" y="482.8" font-size="7" textLength="29.3" lengthAdjust="spacingAndGlyphs" fill="#ffffff">150X75X5X7</text>
<path d="M501.1 454.0L489.5 471.4" stroke="#ffffff" stroke-width="1.2" fill="none"/>
<text class="c" x="514.2" y="480.4" font-size="7" textLength="22.7" lengthAdjust="spacingAndGlyphs" fill="#ffffff">TIE BEAM</text>
<text class="c" x="508.1" y="485.8" font-size="7" textLength="34.4" lengthAdjust="spacingAndGlyphs" fill="#ffffff">200X100X5.5X8</text>
<text class="c" x="563.1" y="516.5" font-size="7" textLength="44.8" lengthAdjust="spacingAndGlyphs" fill="#ffffff">HORIZONTAL GRID</text>
<text class="c" x="567.8" y="522.0" font-size="7" textLength="35.4" lengthAdjust="spacingAndGlyphs" fill="#ffffff">175X125X5.5X8</text>
<text class="c" x="546.0" y="527.5" font-size="7" textLength="32.8" lengthAdjust="spacingAndGlyphs" fill="#ffffff">DOUBLE SIKU</text>
<text class="c" x="552.0" y="532.8" font-size="7" textLength="20.0" lengthAdjust="spacingAndGlyphs" fill="#ffffff">64X6X6</text>
<text class="c" x="552.8" y="547.5" font-size="7" textLength="15.0" lengthAdjust="spacingAndGlyphs" fill="#ffffff">KOLOM</text>
<text class="c" x="543.9" y="553.1" font-size="7" textLength="33.5" lengthAdjust="spacingAndGlyphs" fill="#ffffff">400X200X8X13</text>
<path d="M527.9 536.9L539.1 547.4" stroke="#ffffff" stroke-width="1.1" fill="none"/>
<text class="c" x="512.8" y="563.8" font-size="8" textLength="29.5" lengthAdjust="spacingAndGlyphs" fill="#ffffff">DETAIL C</text>
<text class="c" x="511.2" y="570.4" font-size="8" textLength="32.7" lengthAdjust="spacingAndGlyphs" fill="#ffffff">SKALA 1:10</text>
<path d="M641.4 359.7L641.4 469.1" stroke="#ffffff" stroke-width="1.3" stroke-dasharray="6.5 2.2 1.2 2.2" fill="none"/>
<path d="M810.9 321.0L810.9 464.3" stroke="#ffffff" stroke-width="1.3" stroke-dasharray="6.5 2.2 1.2 2.2" fill="none"/>
<path d="M641.4 384.3L810.9 338.6" stroke="#e4e400" stroke-width="1.2" fill="none"/>
<path d="M641.4 387.1L810.9 341.4" stroke="#e4e400" stroke-width="1.2" fill="none"/>
<path d="M641.4 401.9L810.9 357.2" stroke="#e4e400" stroke-width="2" fill="none"/>
<path d="M641.4 439.7L810.9 393.9" stroke="#e4e400" stroke-width="2" fill="none"/>
<path d="M730.9 485.1L730.9 417.0L754.3 417.0L754.3 485.1" stroke="#d4d400" stroke-width="1.6" fill="none"/>
<path d="M742.1 413.1L742.1 485.1" stroke="#d8d8d8" stroke-width="2.6" fill="none"/>
<rect x="740.1" y="416.5" width="5.0" height="4.0" fill="#e4e4e4"/>
<rect x="741.3" y="423.0" width="1.6" height="1.6" fill="#ff1010"/>
<path d="M713.3 485.1L772.5 485.1" stroke="#ffffff" stroke-width="1.3" stroke-dasharray="5 2.2 1.3 2.2" fill="none"/>
<path d="M759.7 362.9L772.5 362.9L772.5 431.7L759.7 431.7" stroke="#8c3f8c" stroke-width="1" fill="none"/>
<path d="M759.7 360.9v4M762.7 362.9l-3 -1.500v3z" stroke="#8c3f8c" stroke-width="1" fill="#8c3f8c"/>
<path d="M759.7 429.7v4M762.7 431.7l-3 -1.500v3z" stroke="#8c3f8c" stroke-width="1" fill="#8c3f8c"/>
<path d="M708.3 370.0L703.5 371.3L705.2 377.0" stroke="#1ea4de" stroke-width="1.6" fill="none"/>
<path d="M704.7 377.5L705.9 382.5" stroke="#ffffff" stroke-width="2.6" fill="none"/>
<path d="M706.7 382.0L711.0 380.3" stroke="#1ea4de" stroke-width="1.5" fill="none"/>
<text class="c" x="722.3" y="396.2" font-size="6.5" textLength="18.2" lengthAdjust="spacingAndGlyphs" fill="#ffffff">RAFTER</text>
<text class="c" x="715.0" y="401.7" font-size="6.5" textLength="33.5" lengthAdjust="spacingAndGlyphs" fill="#ffffff">400X200X8X13</text>
<text class="c" x="770.3" y="469.4" font-size="8" textLength="47.6" lengthAdjust="spacingAndGlyphs" fill="#ffffff">VERTICAL GRID</text>
<text class="c" x="773.5" y="476.3" font-size="8" textLength="40.6" lengthAdjust="spacingAndGlyphs" fill="#ffffff">250X125X6X9</text>
<path d="M754.3 462.7L780.5 462.7" stroke="#dcdcdc" stroke-width="1.2" fill="none"/>
<text class="c" x="726.1" y="501.1" font-size="9" textLength="36.2" lengthAdjust="spacingAndGlyphs" fill="#ffffff">DETAIL B</text>
<text class="c" x="723.9" y="509.1" font-size="9" textLength="40.6" lengthAdjust="spacingAndGlyphs" fill="#ffffff">SKALA 1:10</text>
<path d="M829.4 302.2L829.4 423.7" stroke="#ffffff" stroke-width="1.3" stroke-dasharray="6.5 2.2 1.2 2.2" fill="none"/>
<path d="M1030.9 302.2L1030.9 423.7" stroke="#ffffff" stroke-width="1.3" stroke-dasharray="6.5 2.2 1.2 2.2" fill="none"/>
<path d="M829.4 338.0L925.5 312.0" stroke="#e4e400" stroke-width="1.2" fill="none"/>
<path d="M829.4 340.8L925.5 314.8" stroke="#e4e400" stroke-width="1.2" fill="none"/>
<path d="M934.8 312.0L1030.9 338.0" stroke="#e4e400" stroke-width="1.2" fill="none"/>
<path d="M934.8 314.8L1030.9 340.8" stroke="#e4e400" stroke-width="1.2" fill="none"/>
<path d="M829.4 356.2L930.2 329.0L1030.9 356.2" stroke="#e4e400" stroke-width="2" fill="none"/>
<path d="M829.4 393.9L930.2 366.8L1030.9 393.9" stroke="#e4e400" stroke-width="2" fill="none"/>
<path d="M910.9 316.4L914.9 314.1L929.9 309.7L946.8 314.1L949.5 316.4" stroke="#1ea4de" stroke-width="1.5" fill="none"/>
<path d="M913.6 319.2L908.8 320.5L910.5 326.2" stroke="#1ea4de" stroke-width="1.6" fill="none"/>
<path d="M910.0 326.7L911.2 331.7" stroke="#ffffff" stroke-width="2.6" fill="none"/>
<path d="M912.0 331.2L916.3 329.5" stroke="#1ea4de" stroke-width="1.5" fill="none"/>
<path d="M946.8 319.2L951.6 320.5L949.9 326.2" stroke="#1ea4de" stroke-width="1.6" fill="none"/>
<path d="M950.4 326.7L949.2 331.7" stroke="#ffffff" stroke-width="2.6" fill="none"/>
<path d="M948.4 331.2L944.1 329.5" stroke="#1ea4de" stroke-width="1.5" fill="none"/>
<path d="M930.2 329.0L930.2 372.0" stroke="#ffffff" stroke-width="1.6" fill="none"/>
<rect x="927.7" y="334.6" width="5.4" height="3.6" fill="#e4e4e4"/>
<rect x="927.7" y="341.0" width="5.4" height="3.6" fill="#e4e4e4"/>
<rect x="927.7" y="347.4" width="5.4" height="3.6" fill="#e4e4e4"/>
<rect x="927.7" y="353.8" width="5.4" height="3.6" fill="#e4e4e4"/>
<rect x="927.7" y="360.2" width="5.4" height="3.6" fill="#e4e4e4"/>
<rect x="927.7" y="372.0" width="5.4" height="3.6" fill="#e4e4e4"/>
<rect x="929.4" y="366.3" width="1.6" height="1.7" fill="#ff1010"/>
<rect x="929.9" y="377.3" width="1.6" height="1.7" fill="#ff1010"/>
<path d="M920.9 401.3L920.9 370.0L939.1 370.0L939.1 401.3" stroke="#d4d400" stroke-width="1.6" fill="none"/>
<path d="M929.5 376.0L929.5 401.3" stroke="#cfcfcf" stroke-width="2.6" fill="none"/>
<path d="M907.1 401.3L953.5 401.3" stroke="#ffffff" stroke-width="1.3" stroke-dasharray="5 2.2 1.3 2.2" fill="none"/>
<path d="M966.3 331.6L973.6 331.6L973.6 380.5L966.3 380.5" stroke="#8c3f8c" stroke-width="1" fill="none"/>
<path d="M966.3 329.6v4M969.3 331.6l-3 -1.500v3z" stroke="#8c3f8c" stroke-width="1" fill="#8c3f8c"/>
<path d="M966.3 378.5v4M969.3 380.5l-3 -1.500v3z" stroke="#8c3f8c" stroke-width="1" fill="#8c3f8c"/>
<text class="c" x="936.6" y="344.4" font-size="6.5" textLength="36.1" lengthAdjust="spacingAndGlyphs" fill="#ffffff">BAUT &#216;20mm</text>
<text class="c" x="935.9" y="365.2" font-size="6.5" textLength="27.2" lengthAdjust="spacingAndGlyphs" fill="#ffffff">END PLATE</text>
<text class="c" x="859.2" y="365.2" font-size="6.5" textLength="17.6" lengthAdjust="spacingAndGlyphs" fill="#ffffff">RAFTER</text>
<text class="c" x="851.2" y="370.6" font-size="6.5" textLength="33.5" lengthAdjust="spacingAndGlyphs" fill="#ffffff">400X200X8X13</text>
<text class="c" x="987.1" y="365.2" font-size="6.5" textLength="17.6" lengthAdjust="spacingAndGlyphs" fill="#ffffff">RAFTER</text>
<text class="c" x="979.1" y="370.6" font-size="6.5" textLength="33.6" lengthAdjust="spacingAndGlyphs" fill="#ffffff">400X200X8X13</text>
<text class="c" x="945.5" y="395.3" font-size="6.5" textLength="38.4" lengthAdjust="spacingAndGlyphs" fill="#ffffff">VERTICAL GRID</text>
<text class="c" x="947.7" y="400.4" font-size="6.5" textLength="33.0" lengthAdjust="spacingAndGlyphs" fill="#ffffff">250X125X6X9</text>
<path d="M939.1 393.0L945.0 393.0" stroke="#ffffff" stroke-width="1.1" fill="none"/>
<text class="c" x="914.5" y="412.4" font-size="7.8" textLength="30.4" lengthAdjust="spacingAndGlyphs" fill="#ffffff">DETAIL A</text>
<text class="c" x="913.5" y="418.7" font-size="7.8" textLength="32.6" lengthAdjust="spacingAndGlyphs" fill="#ffffff">SKALA 1:10</text>
<path d="M1042.1 315.0L1042.1 456.3" stroke="#ffffff" stroke-width="1.3" stroke-dasharray="6.5 2.2 1.2 2.2" fill="none"/>
<path d="M1211.6 354.9L1211.6 465.0" stroke="#ffffff" stroke-width="1.3" stroke-dasharray="6.5 2.2 1.2 2.2" fill="none"/>
<path d="M1042.1 333.2L1211.6 378.0" stroke="#e4e400" stroke-width="1.2" fill="none"/>
<path d="M1042.1 336.0L1211.6 380.8" stroke="#e4e400" stroke-width="1.2" fill="none"/>
<path d="M1042.1 350.8L1211.6 396.5" stroke="#e4e400" stroke-width="2" fill="none"/>
<path d="M1042.1 388.5L1211.6 433.9" stroke="#e4e400" stroke-width="2" fill="none"/>
<path d="M1098.4 480.3L1098.4 410.9L1121.4 410.9L1121.4 480.3" stroke="#d4d400" stroke-width="1.6" fill="none"/>
<path d="M1110.2 406.7L1110.2 480.3" stroke="#d8d8d8" stroke-width="2.6" fill="none"/>
<rect x="1107.9" y="410.5" width="5.0" height="4.0" fill="#e4e4e4"/>
<path d="M1079.8 480.3L1139.0 480.3" stroke="#ffffff" stroke-width="1.3" stroke-dasharray="5 2.2 1.3 2.2" fill="none"/>
<path d="M1097.4 357.8L1086.2 357.8L1086.2 426.9L1097.4 426.9" stroke="#8c3f8c" stroke-width="1" fill="none"/>
<path d="M1097.4 355.8v4M1094.4 357.8l3 -1.500v3z" stroke="#8c3f8c" stroke-width="1" fill="#8c3f8c"/>
<path d="M1097.4 424.9v4M1094.4 426.9l3 -1.500v3z" stroke="#8c3f8c" stroke-width="1" fill="#8c3f8c"/>
<path d="M1145.7 364.5L1150.5 365.8L1148.8 371.5" stroke="#1ea4de" stroke-width="1.6" fill="none"/>
<path d="M1149.3 372.0L1148.1 377.0" stroke="#ffffff" stroke-width="2.6" fill="none"/>
<path d="M1147.3 376.5L1143.0 374.8" stroke="#1ea4de" stroke-width="1.5" fill="none"/>
<text class="c" x="1111.8" y="390.5" font-size="6.5" textLength="18.5" lengthAdjust="spacingAndGlyphs" fill="#ffffff">RAFTER</text>
<text class="c" x="1103.8" y="396.2" font-size="6.5" textLength="34.2" lengthAdjust="spacingAndGlyphs" fill="#ffffff">400X200X8X13</text>
<text class="c" x="1035.7" y="464.6" font-size="8" textLength="48.0" lengthAdjust="spacingAndGlyphs" fill="#ffffff">VERTICAL GRID</text>
<text class="c" x="1039.2" y="470.9" font-size="8" textLength="40.6" lengthAdjust="spacingAndGlyphs" fill="#ffffff">250X125X6X9</text>
<path d="M1073.4 456.9L1098.4 456.9" stroke="#dcdcdc" stroke-width="1.2" fill="none"/>
<text class="c" x="1091.0" y="495.3" font-size="9" textLength="35.8" lengthAdjust="spacingAndGlyphs" fill="#ffffff">DETAIL B</text>
<text class="c" x="1088.8" y="503.3" font-size="9" textLength="40.6" lengthAdjust="spacingAndGlyphs" fill="#ffffff">SKALA 1:10</text>
<path d="M912.6 469.1L972.7 469.1" stroke="#ffffff" stroke-width="1.3" stroke-dasharray="5 2.2 1.3 2.2" fill="none"/>
<path d="M912.6 587.4L972.7 587.4" stroke="#ffffff" stroke-width="1.3" stroke-dasharray="5 2.2 1.3 2.2" fill="none"/>
<path d="M931.1 469.1L931.1 587.4" stroke="#e4e400" stroke-width="3" fill="none"/>
<path d="M952.9 469.1L952.9 587.4" stroke="#e4e400" stroke-width="3" fill="none"/>
<path d="M942.3 469.1L942.3 587.4" stroke="#e0e0e0" stroke-width="1.6" fill="none"/>
<path d="M886.3 511.3L931.1 511.3" stroke="#e4e400" stroke-width="2.4" fill="none"/>
<path d="M952.9 511.3L999.9 511.3" stroke="#e4e400" stroke-width="2.4" fill="none"/>
<path d="M886.3 527.3L931.1 527.3" stroke="#e4e400" stroke-width="2.4" fill="none"/>
<path d="M952.9 527.3L999.9 527.3" stroke="#e4e400" stroke-width="2.4" fill="none"/>
<path d="M886.3 493.1L886.3 541.0" stroke="#ffffff" stroke-width="1.3" stroke-dasharray="5 2.2 1.3 2.2" fill="none"/>
<path d="M999.9 493.1L999.9 541.0" stroke="#ffffff" stroke-width="1.3" stroke-dasharray="5 2.2 1.3 2.2" fill="none"/>
<path d="M918.3 498.5L910.3 498.5L910.3 538.8L918.3 538.8" stroke="#8c3f8c" stroke-width="1" fill="none"/>
<path d="M918.3 496.5v4M915.3 498.5l3 -1.500v3z" stroke="#8c3f8c" stroke-width="1" fill="#8c3f8c"/>
<path d="M918.3 536.8v4M915.3 538.8l3 -1.500v3z" stroke="#8c3f8c" stroke-width="1" fill="#8c3f8c"/>
<path d="M966.9 498.5L975.2 498.5L975.2 538.8L966.9 538.8" stroke="#8c3f8c" stroke-width="1" fill="none"/>
<path d="M966.9 496.5v4M969.9 498.5l-3 -1.500v3z" stroke="#8c3f8c" stroke-width="1" fill="#8c3f8c"/>
<path d="M966.9 536.8v4M969.9 538.8l-3 -1.500v3z" stroke="#8c3f8c" stroke-width="1" fill="#8c3f8c"/>
<rect x="931.5" y="513.0" width="-9.0" height="12.0" fill="none" stroke="#e8e8e8" stroke-width="1.1"/>
<rect x="925.0" y="513.8" width="5.0" height="2.4" fill="#f0f0f0"/>
<rect x="925.0" y="517.8" width="5.0" height="2.4" fill="#f0f0f0"/>
<rect x="925.0" y="521.8" width="5.0" height="2.4" fill="#f0f0f0"/>
<path d="M919.5 513.0v12M921.0 515.0h-3M921.0 523.0h-3" stroke="#ffffff" stroke-width="1" fill="none"/>
<rect x="952.5" y="513.0" width="9.0" height="12.0" fill="none" stroke="#e8e8e8" stroke-width="1.1"/>
<rect x="954.0" y="513.8" width="5.0" height="2.4" fill="#f0f0f0"/>
<rect x="954.0" y="517.8" width="5.0" height="2.4" fill="#f0f0f0"/>
<rect x="954.0" y="521.8" width="5.0" height="2.4" fill="#f0f0f0"/>
<path d="M964.5 513.0v12M963.0 515.0h3M963.0 523.0h3" stroke="#ffffff" stroke-width="1" fill="none"/>
<text class="c" x="960.9" y="487.3" font-size="8" textLength="48.6" lengthAdjust="spacingAndGlyphs" fill="#ffffff">VERTICAL GRID</text>
<text class="c" x="965.3" y="494.4" font-size="8" textLength="39.4" lengthAdjust="spacingAndGlyphs" fill="#ffffff">250X125X6X9</text>
<path d="M943.3 485.1L956.7 485.1" stroke="#ffffff" stroke-width="1.2" fill="none"/>
<text class="c" x="839.0" y="513.0" font-size="6.5" textLength="44.8" lengthAdjust="spacingAndGlyphs" fill="#ffffff">HORIZONTAL GRID</text>
<text class="c" x="843.2" y="518.7" font-size="6.5" textLength="36.1" lengthAdjust="spacingAndGlyphs" fill="#ffffff">175X125X5.5X8</text>
<path d="M879.0 518.6L888.5 518.6L888.5 515.5" stroke="#ffffff" stroke-width="1" fill="none"/>
<text class="c" x="1002.1" y="513.0" font-size="6.5" textLength="44.1" lengthAdjust="spacingAndGlyphs" fill="#ffffff">HORIZONTAL GRID</text>
<text class="c" x="1007.2" y="518.7" font-size="6.5" textLength="34.9" lengthAdjust="spacingAndGlyphs" fill="#ffffff">175X125X5.5X8</text>
<path d="M997.5 515.5L997.5 518.6L1007.0 518.6" stroke="#ffffff" stroke-width="1" fill="none"/>
<text class="c" x="927.9" y="599.2" font-size="9" textLength="36.2" lengthAdjust="spacingAndGlyphs" fill="#ffffff">DETAIL G</text>
<text class="c" x="925.7" y="607.2" font-size="9" textLength="40.6" lengthAdjust="spacingAndGlyphs" fill="#ffffff">SKALA 1:10</text>
<path d="M459.1 713.9L534.1 713.9" stroke="#ffffff" stroke-width="1.3" stroke-dasharray="4.5 2 1 2" fill="none"/>
<path d="M459.1 898.7L536.0 898.7" stroke="#ffffff" stroke-width="1.3" stroke-dasharray="4.5 2 1 2" fill="none"/>
<path d="M479.8 713.9L479.8 898.7" stroke="#e4e400" stroke-width="2.4" fill="none"/>
<path d="M516.4 713.9L516.4 898.7" stroke="#e4e400" stroke-width="2.4" fill="none"/>
<path d="M460.0 713.9L460.0 781.5" stroke="#58d826" stroke-width="1.4" fill="none" stroke-dasharray="3 .8"/>
<path d="M460.0 781.5L456.0 787.7L459.1 795.4" stroke="#e4e400" stroke-width="1.4" fill="none"/>
<path d="M470.5 713.9L470.5 792.3" stroke="#58d826" stroke-width="1.6" fill="none"/>
<path d="M458.1 768.4L479.8 768.4" stroke="#ff1010" stroke-width="2.6" fill="none"/>
<path d="M411.9 758.2L411.9 878.2" stroke="#ffffff" stroke-width="1.3" stroke-dasharray="3.5 1.8 1 1.8" fill="none"/>
<path d="M580.0 754.2L580.0 860.5" stroke="#ffffff" stroke-width="1.3" stroke-dasharray="3.5 1.8 1 1.8" fill="none"/>
<path d="M411.9 804.7L479.8 791.4" stroke="#e4e400" stroke-width="1.2" fill="none"/>
<path d="M411.9 807.2L479.8 793.9" stroke="#e4e400" stroke-width="1.2" fill="none"/>
<path d="M411.9 818.7L479.8 805.3" stroke="#e4e400" stroke-width="2" fill="none"/>
<path d="M411.9 837.3L479.8 823.3" stroke="#e4e400" stroke-width="2" fill="none"/>
<path d="M516.4 788.6L580.0 788.6" stroke="#e4e400" stroke-width="2.6" fill="none"/>
<path d="M516.4 804.1L580.0 804.1" stroke="#e4e400" stroke-width="2.6" fill="none"/>
<rect x="490.1" y="761.3" width="20.1" height="3.7" fill="#ffffff"/>
<rect x="485.4" y="811.9" width="20.2" height="3.7" fill="#ffffff"/>
<rect x="492.2" y="785.5" width="11.8" height="11.5" fill="none" stroke="#f000f0" stroke-width="1.4"/>
<rect x="494.2" y="787.5" width="7.8" height="2.6" fill="#ffffff"/>
<rect x="494.2" y="792.5" width="7.8" height="2.6" fill="#ffffff"/>
<rect x="497.2" y="790.2" width="1.8" height="2.0" fill="#f000f0"/>
<path d="M492.2 782.3L504.0 782.3" stroke="#dcdcdc" stroke-width="1.2" fill="none"/>
<path d="M492.2 800.2L504.0 800.2" stroke="#dcdcdc" stroke-width="1.2" fill="none"/>
<path d="M502.5 766.9L500.9 782.0" stroke="#ffffff" stroke-width="1.1" fill="none"/>
<path d="M492.2 782.1L516.4 782.1" stroke="#cfcfcf" stroke-width="1" fill="none"/>
<rect x="516.8" y="790.3" width="9.0" height="12.0" fill="none" stroke="#e8e8e8" stroke-width="1.1"/>
<rect x="518.3" y="791.1" width="5.0" height="2.4" fill="#f0f0f0"/>
<rect x="518.3" y="795.1" width="5.0" height="2.4" fill="#f0f0f0"/>
<rect x="518.3" y="799.1" width="5.0" height="2.4" fill="#f0f0f0"/>
<path d="M528.8 790.3v12M527.3 792.3h3M527.3 800.3h3" stroke="#ffffff" stroke-width="1" fill="none"/>
<rect x="477.3" y="805.9" width="4.6" height="3.2" fill="#e4e4e4"/>
<rect x="477.3" y="810.9" width="4.6" height="3.2" fill="#e4e4e4"/>
<rect x="477.3" y="815.9" width="4.6" height="3.2" fill="#e4e4e4"/>
<rect x="477.3" y="819.9" width="4.6" height="3.2" fill="#e4e4e4"/>
<path d="M479.8 807.2L485.4 812.5" stroke="#ffffff" stroke-width="1.1" fill="none"/>
<path d="M448.8 804.1L440.5 804.1L440.5 835.7L448.8 835.7" stroke="#8c3f8c" stroke-width="1" fill="none"/>
<path d="M448.8 802.1v4M445.8 804.1l3 -1.500v3z" stroke="#8c3f8c" stroke-width="1" fill="#8c3f8c"/>
<path d="M448.8 833.7v4M445.8 835.7l3 -1.500v3z" stroke="#8c3f8c" stroke-width="1" fill="#8c3f8c"/>
<path d="M569.1 769.7L578.4 769.7L578.4 814.7L569.1 814.7" stroke="#8c3f8c" stroke-width="1" fill="none"/>
<path d="M569.1 767.7v4M572.1 769.7l-3 -1.500v3z" stroke="#8c3f8c" stroke-width="1" fill="#8c3f8c"/>
<path d="M569.1 812.7v4M572.1 814.7l-3 -1.500v3z" stroke="#8c3f8c" stroke-width="1" fill="#8c3f8c"/>
<path d="M462.500 797l2 4l3.500 -1.500M464.500 801l2.500 5" stroke="#1ea4de" stroke-width="1.4" fill="none"/>
<text class="c" x="521.1" y="778.2" font-size="6.5" textLength="20.8" lengthAdjust="spacingAndGlyphs" fill="#ffffff">TIE BEAM</text>
<text class="c" x="516.4" y="782.9" font-size="6" textLength="30.4" lengthAdjust="spacingAndGlyphs" fill="#ffffff">200X100X5.5X8</text>
<text class="c" x="521.1" y="823.1" font-size="8" textLength="48.7" lengthAdjust="spacingAndGlyphs" fill="#ffffff">HORIZONTAL GRID</text>
<text class="c" x="525.7" y="829.5" font-size="8" textLength="39.7" lengthAdjust="spacingAndGlyphs" fill="#ffffff">175X125X5.5X8</text>
<path d="M535.0 804.7L535.0 811.9L549.0 811.9" stroke="#ffffff" stroke-width="1.1" fill="none"/>
<text class="c" x="431.2" y="820.0" font-size="6" textLength="31.0" lengthAdjust="spacingAndGlyphs" fill="#ffffff">RAFTER ANAK</text>
<text class="c" x="430.5" y="824.8" font-size="6" textLength="31.7" lengthAdjust="spacingAndGlyphs" fill="#ffffff">200X100X5.5X8</text>
<text class="c" x="528.2" y="867.7" font-size="7" textLength="16.8" lengthAdjust="spacingAndGlyphs" fill="#ffffff">KOLOM</text>
<text class="c" x="517.4" y="873.3" font-size="7" textLength="37.8" lengthAdjust="spacingAndGlyphs" fill="#ffffff">400X200X8X13</text>
<path d="M510.9 849.7L522.6 860.5" stroke="#ffffff" stroke-width="1.1" fill="none"/>
<text class="c" x="482.3" y="911.5" font-size="8" textLength="32.6" lengthAdjust="spacingAndGlyphs" fill="#ffffff">DETAIL E</text>
<text class="c" x="480.8" y="918.5" font-size="8" textLength="35.6" lengthAdjust="spacingAndGlyphs" fill="#ffffff">SKALA 1:10</text>
<path d="M676.7 719.5L676.7 904.0" stroke="#ffffff" stroke-width="1.4" stroke-dasharray="9 3 1.5 3" fill="none"/>
<path d="M621.9 753.6L828.1 753.6" stroke="#e0e0e0" stroke-width="1.6" stroke-dasharray="11 3.5 2 3.5" fill="none"/>
<path d="M618.8 860.5L825.0 860.5" stroke="#e0e0e0" stroke-width="1.6" stroke-dasharray="11 3.5 2 3.5" fill="none"/>
<path d="M678.0 754.5L678.0 859.8" stroke="#e4e400" stroke-width="1.6" fill="none"/>
<path d="M681.4 754.5L681.4 859.8" stroke="#e4e400" stroke-width="1.6" fill="none"/>
<path d="M766.5 754.5L766.5 859.8" stroke="#e4e400" stroke-width="1.6" fill="none"/>
<path d="M770.0 754.5L770.0 859.8" stroke="#e4e400" stroke-width="1.6" fill="none"/>
<path d="M678.0 754.5L770.0 754.5" stroke="#e4e400" stroke-width="1.5" fill="none"/>
<path d="M678.0 756.8L770.0 756.8" stroke="#e4e400" stroke-width="1.5" fill="none"/>
<path d="M678.0 856.6L770.0 856.6" stroke="#e4e400" stroke-width="1.5" fill="none"/>
<path d="M678.0 859.5L770.0 859.5" stroke="#e4e400" stroke-width="1.5" fill="none"/>
<path d="M681.0 796.5L767.0 796.5" stroke="#e4e400" stroke-width="1.5" fill="none"/>
<path d="M681.0 800.3L767.0 800.3" stroke="#e4e400" stroke-width="1.5" fill="none"/>
<path d="M681.0 757.0L767.0 796.0" stroke="#b05252" stroke-width="1.6" fill="none"/>
<path d="M681.0 796.0L767.0 757.0" stroke="#b05252" stroke-width="1.6" fill="none"/>
<path d="M681.0 801.0L767.0 856.0" stroke="#b05252" stroke-width="1.6" fill="none"/>
<path d="M681.0 856.0L767.0 801.0" stroke="#b05252" stroke-width="1.6" fill="none"/>
<text class="c" x="718.0" y="741.3" font-size="6.5" textLength="38.7" lengthAdjust="spacingAndGlyphs" fill="#ffffff">IKATAN ANGIN</text>
<text class="c" x="728.8" y="747.2" font-size="6.5" textLength="17.1" lengthAdjust="spacingAndGlyphs" fill="#ffffff">&#216; 8mm</text>
<path d="M715.8 743.3L694.7 760.7" stroke="#ffffff" stroke-width="1.2" fill="none"/>
<text class="c" x="794.0" y="803.9" font-size="6.5" textLength="17.0" lengthAdjust="spacingAndGlyphs" fill="#ffffff">KOLOM</text>
<text class="c" x="784.0" y="809.5" font-size="6.5" textLength="36.9" lengthAdjust="spacingAndGlyphs" fill="#ffffff">400X200X8X13</text>
<path d="M768.2 791.4L786.2 802.2" stroke="#ffffff" stroke-width="1.2" fill="none"/>
<text class="c" x="785.6" y="821.9" font-size="6.5" textLength="26.3" lengthAdjust="spacingAndGlyphs" fill="#ffffff">TIE BEAM</text>
<text class="c" x="780.0" y="827.8" font-size="6.5" textLength="38.8" lengthAdjust="spacingAndGlyphs" fill="#ffffff">200X100X5.5X8</text>
<path d="M755.2 799.1L784.7 820.2" stroke="#ffffff" stroke-width="1.2" fill="none"/>
<text class="c" x="780.9" y="873.1" font-size="6.5" textLength="38.8" lengthAdjust="spacingAndGlyphs" fill="#ffffff">IKATAN ANGIN</text>
<text class="c" x="787.8" y="879.0" font-size="6.5" textLength="24.8" lengthAdjust="spacingAndGlyphs" fill="#ffffff">L 60.60.6</text>
<path d="M749.0 845.0L776.9 867.7" stroke="#ffffff" stroke-width="1.2" fill="none"/>
<text class="c" x="704.0" y="872.7" font-size="8" textLength="31.0" lengthAdjust="spacingAndGlyphs" fill="#ffffff">DETAIL I</text>
<text class="c" x="700.9" y="879.8" font-size="8" textLength="37.2" lengthAdjust="spacingAndGlyphs" fill="#ffffff">SKALA 1:50</text>
<path d="M916.0 754.2L1156.0 754.2" stroke="#3f9a22" stroke-width="1.1" fill="none" stroke-dasharray="5 3"/>
<path d="M916.0 880.7L1156.0 880.7" stroke="#3f9a22" stroke-width="1.1" fill="none" stroke-dasharray="5 3"/>
<path d="M915.3 720.1L915.3 900.9" stroke="#ffffff" stroke-width="1.4" stroke-dasharray="9 3 1.5 3" fill="none"/>
<path d="M860.2 754.2L1229.1 754.2" stroke="#e0e0e0" stroke-width="1.7" stroke-dasharray="11 3.5 2 3.5" fill="none"/>
<path d="M855.5 880.7L1219.8 880.7" stroke="#e0e0e0" stroke-width="1.7" stroke-dasharray="11 3.5 2 3.5" fill="none"/>
<path d="M916.0 756.7L1185.7 756.7" stroke="#58d826" stroke-width="1.2" fill="none"/>
<path d="M916.0 877.0L1185.7 877.0" stroke="#58d826" stroke-width="1.2" fill="none"/>
<path d="M917.5 758.2L1038.4 876.0" stroke="#b05252" stroke-width="1.5" fill="none"/>
<path d="M917.5 876.0L1038.4 758.2" stroke="#b05252" stroke-width="1.5" fill="none"/>
<path d="M1038.4 758.2L1170.2 876.0" stroke="#b05252" stroke-width="1.5" fill="none"/>
<path d="M1038.4 876.0L1170.2 758.2" stroke="#b05252" stroke-width="1.5" fill="none"/>
<path d="M1156.3 754.2L1156.3 880.7" stroke="#e4e400" stroke-width="1.3" fill="none"/>
<path d="M1160.9 754.2L1160.9 880.7" stroke="#e4e400" stroke-width="1.3" fill="none"/>
<path d="M1176.4 754.2L1176.4 880.7" stroke="#e4e400" stroke-width="1.3" fill="none"/>
<path d="M1182.6 754.2L1182.6 880.7" stroke="#e4e400" stroke-width="1.3" fill="none"/>
<path d="M1185.7 754.2L1185.7 880.7" stroke="#e4e400" stroke-width="1.3" fill="none"/>
<path d="M1179.0 754.2L1179.0 880.7" stroke="#58d826" stroke-width="1.2" fill="none"/>
<path d="M1156.3 766.0L1185.7 766.0" stroke="#e8e8e8" stroke-width="1.3" fill="none"/>
<path d="M1156.3 790.8L1185.7 790.8" stroke="#e8e8e8" stroke-width="1.3" fill="none"/>
<path d="M1156.3 815.6L1185.7 815.6" stroke="#e8e8e8" stroke-width="1.3" fill="none"/>
<path d="M1156.3 841.0L1185.7 841.0" stroke="#e8e8e8" stroke-width="1.3" fill="none"/>
<path d="M1156.3 865.2L1185.7 865.2" stroke="#e8e8e8" stroke-width="1.3" fill="none"/>
<path d="M916.0 754.2L916.0 880.7" stroke="#1ea4de" stroke-width="1.6" fill="none"/>
<path d="M956.9 754.2L956.9 880.7" stroke="#1ea4de" stroke-width="3" fill="none"/>
<path d="M998.1 754.2L998.1 880.7" stroke="#1ea4de" stroke-width="3" fill="none"/>
<path d="M1038.8 754.2L1038.8 880.7" stroke="#1ea4de" stroke-width="3" fill="none"/>
<path d="M1079.4 754.2L1079.4 880.7" stroke="#1ea4de" stroke-width="3" fill="none"/>
<path d="M1120.6 754.2L1120.6 880.7" stroke="#1ea4de" stroke-width="3" fill="none"/>
<path d="M1171.8 754.2L1171.8 880.7" stroke="#1ea4de" stroke-width="3" fill="none"/>
<path d="M916.0 816.7L956.9 816.7" stroke="#ffffff" stroke-width="1.8" fill="none"/>
<path d="M956.9 818.2L1038.8 818.2" stroke="#ffffff" stroke-width="1.8" fill="none"/>
<path d="M1038.8 816.7L1120.6 816.7" stroke="#ffffff" stroke-width="1.8" fill="none"/>
<path d="M1120.6 819.0L1172.9 819.0" stroke="#ffffff" stroke-width="1.8" fill="none"/>
<path d="M917.5 758.2L956.9 814.0" stroke="#ffffff" stroke-width="1.5" fill="none"/>
<path d="M917.5 876.0L956.9 820.2" stroke="#ffffff" stroke-width="1.5" fill="none"/>
<rect x="930.5" y="857.5" width="8" height="4" fill="none" stroke="#b05252" stroke-width="1" transform="rotate(-44 934.5 859.5)"/>
<rect x="1016.5" y="857.5" width="8" height="4" fill="none" stroke="#b05252" stroke-width="1" transform="rotate(44 1020.5 859.5)"/>
<rect x="1054.5" y="857.5" width="8" height="4" fill="none" stroke="#b05252" stroke-width="1" transform="rotate(-42 1058.5 859.5)"/>
<rect x="1146.5" y="856" width="8" height="4" fill="none" stroke="#b05252" stroke-width="1" transform="rotate(42 1150.5 858)"/>
<circle cx="1178.900" cy="762.900" r="1.800" fill="none" stroke="#58d826" stroke-width="1.200"/>
<text class="c" x="1047.1" y="802.4" font-size="6.5" textLength="23.0" lengthAdjust="spacingAndGlyphs" fill="#ffffff">GORDING</text>
<text class="c" x="1046.2" y="808.6" font-size="6.5" textLength="23.9" lengthAdjust="spacingAndGlyphs" fill="#ffffff">KANAL C</text>
<path d="M1038.4 784.0L1055.5 794.8" stroke="#ffffff" stroke-width="1.2" fill="none"/>
<text class="c" x="1012.1" y="833.4" font-size="6.5" textLength="20.1" lengthAdjust="spacingAndGlyphs" fill="#ffffff">SAGROD</text>
<text class="c" x="1015.2" y="839.3" font-size="6.5" textLength="13.3" lengthAdjust="spacingAndGlyphs" fill="#ffffff">&#216;6mm</text>
<path d="M1001.2 817.1L1019.8 828.0" stroke="#ffffff" stroke-width="1.2" fill="none"/>
<text class="c" x="1081.9" y="852.0" font-size="6.5" textLength="54.8" lengthAdjust="spacingAndGlyphs" fill="#ffffff">IKATAN ANGIN ATAP</text>
<text class="c" x="1102.9" y="858.2" font-size="6.5" textLength="13.1" lengthAdjust="spacingAndGlyphs" fill="#ffffff">&#216;8mm</text>
<path d="M1085.0 836.4L1102.0 846.6" stroke="#ffffff" stroke-width="1.2" fill="none"/>
<text class="c" x="1090.5" y="891.7" font-size="6.5" textLength="20.2" lengthAdjust="spacingAndGlyphs" fill="#ffffff">RAFTER</text>
<text class="c" x="1081.9" y="897.3" font-size="6.5" textLength="37.2" lengthAdjust="spacingAndGlyphs" fill="#ffffff">400X200X8X13</text>
<path d="M1067.3 879.8L1083.4 889.4" stroke="#ffffff" stroke-width="1.2" fill="none"/>
<text class="c" x="1025.0" y="914.2" font-size="9" textLength="27.0" lengthAdjust="spacingAndGlyphs" fill="#aaa">DETAIL J</text>
<text class="c" x="1020.8" y="921.7" font-size="9" textLength="37.2" lengthAdjust="spacingAndGlyphs" fill="#aaa">SKALA 1:50</text>
<path d="M1871.6 330.4L1871.6 527.6" stroke="#ffffff" stroke-width="1.3" stroke-dasharray="6.5 2.2 1.2 2.2" fill="none"/>
<path d="M1713.6 412.7L1871.6 379.4" stroke="#e4e400" stroke-width="2.6" fill="none"/>
<path d="M1720.4 424.0L1871.6 391.4" stroke="#e4e400" stroke-width="2" fill="none"/>
<path d="M1717.5 439.1L1802.8 420.1" stroke="#e4e400" stroke-width="2" fill="none"/>
<path d="M1826.0 421.0L1871.6 410.8" stroke="#e4e400" stroke-width="2" fill="none"/>
<path d="M1715.0 425.9L1717.5 439.1" stroke="#58d826" stroke-width="1.8" fill="none"/>
<path d="M1721.3 412.3L1716.5 413.6L1718.2 419.3" stroke="#1ea4de" stroke-width="1.6" fill="none"/>
<path d="M1717.7 419.8L1718.9 424.8" stroke="#ffffff" stroke-width="2.6" fill="none"/>
<path d="M1719.7 424.3L1724.0 422.6" stroke="#1ea4de" stroke-width="1.5" fill="none"/>
<path d="M1803.1 407.5L1803.1 526.7" stroke="#e4e400" stroke-width="2.4" fill="none"/>
<path d="M1825.6 401.7L1825.6 526.7" stroke="#e4e400" stroke-width="2.4" fill="none"/>
<path d="M1776.2 526.7L1836.7 526.7" stroke="#ffffff" stroke-width="1.3" stroke-dasharray="4.5 2 1 2" fill="none"/>
<path d="M1686.5 439.1L1715.0 439.1" stroke="#ff1010" stroke-width="2.4" fill="none"/>
<path d="M1686.5 427.8L1686.5 439.1" stroke="#e4e400" stroke-width="1.6" fill="none"/>
<rect x="1685.0" y="426.6" width="2.0" height="2.0" fill="#ff1010"/>
<path d="M1696.600 439V462.200Q1696.600 466.200 1700.600 466.200H1778.600Q1783 466.200 1783 470.600V526.700" stroke="#58d826" stroke-width="1.6" fill="none"/>
<path d="M1706.200 439V452.500Q1706.200 456.500 1710.200 456.500H1789.100Q1793.600 456.500 1793.600 461V526.700" stroke="#58d826" stroke-width="1.6" fill="none"/>
<path d="M1695.2 450.5L1707.8 450.5" stroke="#ff1010" stroke-width="2.2" fill="none"/>
<path d="M1718.1 455.9L1718.1 467.6" stroke="#ff1010" stroke-width="2.2" fill="none"/>
<path d="M1775.0 455.9L1775.0 467.6" stroke="#ff1010" stroke-width="2.2" fill="none"/>
<path d="M1781.4 472.4L1802.8 472.4" stroke="#ff1010" stroke-width="2.4" fill="none"/>
<path d="M1825.6 486.9L1871.6 486.9" stroke="#e4e400" stroke-width="2.6" fill="none"/>
<path d="M1825.6 503.0L1871.6 503.0" stroke="#e4e400" stroke-width="2.6" fill="none"/>
<rect x="1809.9" y="414.8" width="11.7" height="10.7" fill="none" stroke="#f000f0" stroke-width="1.4"/>
<rect x="1811.9" y="416.3" width="7.7" height="2.6" fill="#ffffff"/>
<rect x="1811.9" y="421.3" width="7.7" height="2.6" fill="#ffffff"/>
<rect x="1814.8" y="419.1" width="1.8" height="2.0" fill="#f000f0"/>
<path d="M1809.9 411.6L1821.6 411.6" stroke="#dcdcdc" stroke-width="1.2" fill="none"/>
<path d="M1809.9 428.7L1821.6 428.7" stroke="#dcdcdc" stroke-width="1.2" fill="none"/>
<rect x="1808.6" y="488.3" width="11.6" height="11.2" fill="none" stroke="#f000f0" stroke-width="1.4"/>
<rect x="1810.6" y="490.1" width="7.6" height="2.6" fill="#ffffff"/>
<rect x="1810.6" y="495.1" width="7.6" height="2.6" fill="#ffffff"/>
<rect x="1813.5" y="492.9" width="1.8" height="2.0" fill="#f000f0"/>
<path d="M1808.6 485.1L1820.2 485.1" stroke="#dcdcdc" stroke-width="1.2" fill="none"/>
<path d="M1808.6 502.7L1820.2 502.7" stroke="#dcdcdc" stroke-width="1.2" fill="none"/>
<rect x="1805.1" y="377.1" width="22.8" height="2.7" fill="#ffffff"/>
<rect x="1831.2" y="410.0" width="21.0" height="2.9" fill="#ffffff"/>
<rect x="1804.1" y="464.1" width="20.9" height="3.8" fill="#ffffff"/>
<path d="M1816.3 380.3L1818.8 410.5" stroke="#ffffff" stroke-width="1.1" fill="none"/>
<path d="M1815.3 431.7L1815.3 442.4" stroke="#ffffff" stroke-width="1.1" fill="none"/>
<path d="M1814 434.500l1.300 -3l1.300 3" stroke="#ffffff" stroke-width="1" fill="none"/>
<path d="M1818.8 458.8L1824.0 462.7" stroke="#ffffff" stroke-width="1" fill="none"/>
<path d="M1818.8 470.5L1818.8 484.0" stroke="#ffffff" stroke-width="1" fill="none"/>
<path d="M1808.6 484.4L1861.9 484.4" stroke="#d8d8d8" stroke-width="1" fill="none"/>
<path d="M1827.0 404.0L1831.2 411.0" stroke="#ffffff" stroke-width="1" fill="none"/>
<path d="M1805.0 395.9L1800.2 397.2L1801.9 402.9" stroke="#1ea4de" stroke-width="1.6" fill="none"/>
<path d="M1801.4 403.4L1802.6 408.4" stroke="#ffffff" stroke-width="2.6" fill="none"/>
<path d="M1803.4 407.9L1807.7 406.2" stroke="#1ea4de" stroke-width="1.5" fill="none"/>
<rect x="1824.7" y="403.8" width="4.6" height="3.4" fill="#e4e4e4"/>
<rect x="1824.7" y="409.7" width="4.6" height="3.4" fill="#e4e4e4"/>
<rect x="1824.7" y="415.5" width="4.6" height="3.4" fill="#e4e4e4"/>
<path d="M1851.2 389.5L1859.0 389.5L1859.0 425.5L1851.2 425.5" stroke="#8c3f8c" stroke-width="1" fill="none"/>
<path d="M1851.2 387.5v4M1854.2 389.5l-3 -1.500v3z" stroke="#8c3f8c" stroke-width="1" fill="#8c3f8c"/>
<path d="M1851.2 423.5v4M1854.2 425.5l-3 -1.500v3z" stroke="#8c3f8c" stroke-width="1" fill="#8c3f8c"/>
<path d="M1836.7 472.8L1845.4 472.8L1845.4 517.4L1836.7 517.4" stroke="#8c3f8c" stroke-width="1" fill="none"/>
<path d="M1836.7 470.8v4M1839.7 472.8l-3 -1.500v3z" stroke="#8c3f8c" stroke-width="1" fill="#8c3f8c"/>
<path d="M1836.7 515.4v4M1839.7 517.4l-3 -1.500v3z" stroke="#8c3f8c" stroke-width="1" fill="#8c3f8c"/>
<rect x="1826.0" y="488.8" width="9.0" height="12.0" fill="none" stroke="#e8e8e8" stroke-width="1.1"/>
<rect x="1827.5" y="489.6" width="5.0" height="2.4" fill="#f0f0f0"/>
<rect x="1827.5" y="493.6" width="5.0" height="2.4" fill="#f0f0f0"/>
<rect x="1827.5" y="497.6" width="5.0" height="2.4" fill="#f0f0f0"/>
<path d="M1838.0 488.8v12M1836.5 490.8h3M1836.5 498.8h3" stroke="#ffffff" stroke-width="1" fill="none"/>
<path d="M1843.1 503.0L1843.1 511.2L1851.2 511.2" stroke="#ffffff" stroke-width="1" fill="none"/>
<text class="c" x="1855.1" y="403.3" font-size="5.5" textLength="30.0" lengthAdjust="spacingAndGlyphs" fill="#ffffff">RAFTER ANAK</text>
<text class="c" x="1855.1" y="408.1" font-size="5.5" textLength="30.0" lengthAdjust="spacingAndGlyphs" fill="#ffffff">200X100X5.5X8</text>
<text class="c" x="1804.1" y="447.5" font-size="6" textLength="23.3" lengthAdjust="spacingAndGlyphs" fill="#ffffff">TIE BEAM</text>
<text class="c" x="1797.9" y="452.7" font-size="6" textLength="34.9" lengthAdjust="spacingAndGlyphs" fill="#ffffff">200X100X5.5X8</text>
<text class="c" x="1826.0" y="466.3" font-size="5.5" textLength="26.2" lengthAdjust="spacingAndGlyphs" fill="#ffffff">KOLOM ANAK</text>
<text class="c" x="1826.0" y="470.9" font-size="5.5" textLength="26.7" lengthAdjust="spacingAndGlyphs" fill="#ffffff">200X100X5.5X8</text>
<text class="c" x="1838.2" y="480.6" font-size="5.5" textLength="20.8" lengthAdjust="spacingAndGlyphs" fill="#ffffff">TIE BEAM</text>
<text class="c" x="1832.8" y="484.7" font-size="5.5" textLength="30.0" lengthAdjust="spacingAndGlyphs" fill="#ffffff">200X100X5.5X8</text>
<text class="c" x="1846.4" y="517.5" font-size="7" textLength="48.4" lengthAdjust="spacingAndGlyphs" fill="#ffffff">HORIZONTAL GRID</text>
<text class="c" x="1851.2" y="523.0" font-size="7" textLength="39.3" lengthAdjust="spacingAndGlyphs" fill="#ffffff">175X125X5.5X8</text>
<text class="c" x="1799.8" y="537.7" font-size="7.5" textLength="25.2" lengthAdjust="spacingAndGlyphs" fill="#ffffff">DETAIL F</text>
<text class="c" x="1798.9" y="543.9" font-size="7.5" textLength="28.5" lengthAdjust="spacingAndGlyphs" fill="#ffffff">SKALA 1:10</text>
<text class="s" x="1841.5" y="391.3" font-size="5" textLength="8.0" lengthAdjust="spacingAndGlyphs" fill="#8c3f8c">V11</text>
<text class="s" x="1841.5" y="427.3" font-size="5" textLength="8.0" lengthAdjust="spacingAndGlyphs" fill="#8c3f8c">V11</text>
<text class="s" x="1830.0" y="474.6" font-size="5" textLength="5.0" lengthAdjust="spacingAndGlyphs" fill="#8c3f8c">IX</text>
<text class="s" x="1830.0" y="519.2" font-size="5" textLength="5.0" lengthAdjust="spacingAndGlyphs" fill="#8c3f8c">IX</text>
<path d="M1756.7 685.6L1831.6 685.6" stroke="#ffffff" stroke-width="1.3" stroke-dasharray="4.5 2 1 2" fill="none"/>
<path d="M1756.7 849.8L1831.6 849.8" stroke="#ffffff" stroke-width="1.3" stroke-dasharray="4.5 2 1 2" fill="none"/>
<path d="M1776.9 685.6L1776.9 849.8" stroke="#e4e400" stroke-width="2.4" fill="none"/>
<path d="M1813.0 685.6L1813.0 849.8" stroke="#e4e400" stroke-width="2.4" fill="none"/>
<path d="M1712.3 736.2L1712.3 843.3" stroke="#ffffff" stroke-width="1.3" stroke-dasharray="3.5 1.8 1 1.8" fill="none"/>
<path d="M1877.2 736.2L1877.2 843.3" stroke="#ffffff" stroke-width="1.3" stroke-dasharray="3.5 1.8 1 1.8" fill="none"/>
<path d="M1712.3 770.4L1776.9 770.4" stroke="#e4e400" stroke-width="2.6" fill="none"/>
<path d="M1813.0 770.4L1877.2 770.4" stroke="#e4e400" stroke-width="2.6" fill="none"/>
<path d="M1712.3 785.6L1776.9 785.6" stroke="#e4e400" stroke-width="2.6" fill="none"/>
<path d="M1813.0 785.6L1877.2 785.6" stroke="#e4e400" stroke-width="2.6" fill="none"/>
<rect x="1789.0" y="770.4" width="12.2" height="11.4" fill="none" stroke="#f000f0" stroke-width="1.4"/>
<rect x="1791.0" y="772.3" width="8.2" height="2.6" fill="#ffffff"/>
<rect x="1791.0" y="777.3" width="8.2" height="2.6" fill="#ffffff"/>
<rect x="1794.2" y="775.1" width="1.8" height="2.0" fill="#f000f0"/>
<path d="M1789.0 767.2L1801.2 767.2" stroke="#dcdcdc" stroke-width="1.2" fill="none"/>
<path d="M1789.0 785.0L1801.2 785.0" stroke="#dcdcdc" stroke-width="1.2" fill="none"/>
<rect x="1784.1" y="740.0" width="25.9" height="3.8" fill="#ffffff"/>
<path d="M1799.7 747.6L1797.8 767.3L1818.7 764.3" stroke="#ffffff" stroke-width="1.1" fill="none"/>
<path d="M1803.1 720.6L1814.5 731.2" stroke="#ffffff" stroke-width="1.1" fill="none"/>
<rect x="1776.5" y="771.5" width="-9.0" height="12.0" fill="none" stroke="#e8e8e8" stroke-width="1.1"/>
<rect x="1770.0" y="772.3" width="5.0" height="2.4" fill="#f0f0f0"/>
<rect x="1770.0" y="776.3" width="5.0" height="2.4" fill="#f0f0f0"/>
<rect x="1770.0" y="780.3" width="5.0" height="2.4" fill="#f0f0f0"/>
<path d="M1764.5 771.5v12M1766.0 773.5h-3M1766.0 781.5h-3" stroke="#ffffff" stroke-width="1" fill="none"/>
<rect x="1813.5" y="771.5" width="9.0" height="12.0" fill="none" stroke="#e8e8e8" stroke-width="1.1"/>
<rect x="1815.0" y="772.3" width="5.0" height="2.4" fill="#f0f0f0"/>
<rect x="1815.0" y="776.3" width="5.0" height="2.4" fill="#f0f0f0"/>
<rect x="1815.0" y="780.3" width="5.0" height="2.4" fill="#f0f0f0"/>
<path d="M1825.5 771.5v12M1824.0 773.5h3M1824.0 781.5h3" stroke="#ffffff" stroke-width="1" fill="none"/>
<text class="c" x="1825.2" y="734.2" font-size="6" textLength="17.1" lengthAdjust="spacingAndGlyphs" fill="#ffffff">KOLOM</text>
<text class="c" x="1815.7" y="739.9" font-size="6" textLength="36.1" lengthAdjust="spacingAndGlyphs" fill="#ffffff">400X200X8X13</text>
<text class="c" x="1823.3" y="760.1" font-size="6.5" textLength="26.6" lengthAdjust="spacingAndGlyphs" fill="#ffffff">TIE BEAM</text>
<text class="c" x="1817.6" y="765.8" font-size="6.5" textLength="38.0" lengthAdjust="spacingAndGlyphs" fill="#ffffff">200X100X5.5X8</text>
<text class="c" x="1716.1" y="800.2" font-size="7" textLength="49.0" lengthAdjust="spacingAndGlyphs" fill="#ffffff">HORIZONTAL GRID</text>
<text class="c" x="1721.4" y="806.3" font-size="7" textLength="38.4" lengthAdjust="spacingAndGlyphs" fill="#ffffff">175X125X5.5X8</text>
<path d="M1725.6 785.6L1725.6 793.9L1737.7 793.9" stroke="#ffffff" stroke-width="1.1" fill="none"/>
<text class="c" x="1826.3" y="800.2" font-size="7" textLength="49.0" lengthAdjust="spacingAndGlyphs" fill="#ffffff">HORIZONTAL GRID</text>
<text class="c" x="1830.9" y="806.3" font-size="7" textLength="39.9" lengthAdjust="spacingAndGlyphs" fill="#ffffff">175X125X5.5X8</text>
<path d="M1823.3 785.6L1823.3 793.9L1835.4 793.9" stroke="#ffffff" stroke-width="1.1" fill="none"/>
<text class="c" x="1778.8" y="858.4" font-size="8" textLength="33.1" lengthAdjust="spacingAndGlyphs" fill="#ffffff">DETAIL H</text>
<text class="c" x="1777.6" y="865.2" font-size="8" textLength="35.4" lengthAdjust="spacingAndGlyphs" fill="#ffffff">SKALA 1:10</text>
<rect x="16.0" y="977.3" width="9.8" height="9.5" fill="none" stroke="#e6e6e6" stroke-width="1.3"/>
<path d="M20.1 977.3L20.1 932.5" stroke="#e6e6e6" stroke-width="1.3" fill="none"/>
<path d="M25.8 982.3L70.3 982.3" stroke="#e6e6e6" stroke-width="1.3" fill="none"/>
<path d="M22.900 915l6 6.500l6 -6.500M28.900 921.500v6" stroke="#e6e6e6" stroke-width="1.4" fill="none"/>
<path d="M75.100 968.600l12.900 12.300M88 968.600l-12.900 12.300" stroke="#e6e6e6" stroke-width="1.4" fill="none"/>
</svg>
<div class="panel" style="left:3px;width:222px"><div class="ptitle"></div></div>
<div class="panel" style="left:227px;width:248px"><div class="ptitle"></div></div>
<div class="panel" style="left:477px;width:187px"><div class="ptitle"></div></div>
<div class="panel" style="left:665px;width:272px"><div class="ptitle"></div></div>
<div class="panel" style="left:938px;width:160px"><div class="ptitle"></div></div>
<div class="panel" style="left:1099px;width:264px"><div class="ptitle"></div></div>
<div class="panel" style="left:1365px;width:68px"><div class="ptitle"></div></div>
<div class="panel" style="left:1434px;width:95px"><div class="ptitle"></div></div>
<div class="panel" style="left:1531px;width:79px"><div class="ptitle"></div></div>
<div class="panel" style="left:1612px;width:59px"><div class="ptitle"></div></div>
<svg class="abs" style="left:0;top:0" width="1919" height="172" viewBox="0 0 1919 172" font-family="Liberation Sans, sans-serif" font-size="12.5" fill="#f2f2f2">
<rect x="727.500" y="50.500" width="207" height="21" fill="url(#dd)" stroke="#2a2a2a"/>
<rect x="1181.500" y="50.5" width="179" height="21" fill="url(#dd)" stroke="#2a2a2a"/>
<rect x="1181.500" y="73.5" width="179" height="21" fill="url(#dd)" stroke="#2a2a2a"/>
<rect x="1181.500" y="97.5" width="179" height="21" fill="url(#dd)" stroke="#2a2a2a"/>
<text x="3.500" y="30" font-size="35" font-weight="bold" fill="#c4211d" textLength="25" lengthAdjust="spacingAndGlyphs">A</text>
<path d="M31 18.500h7.500l-3.800 4.500z" fill="#222"/>
<path d="M50 5.500h11l5.500 5v7.500h-16.500z" fill="#fff"/><path d="M61 5.500v5h5.500z" fill="#d0d0d0"/>
<path d="M74 6h6l2 2h5v3h-13z" fill="#f4f4f4"/><path d="M77 10.500h12.500l-3.500 8h-12z" fill="#e6e6e6"/>
<path d="M98 4h14l2 2v14h-16z" fill="#c6c6c6"/><rect x="101" y="4" width="9" height="6" fill="#f2f2f2"/><rect x="101" y="14" width="10" height="6" fill="#efefef"/><rect x="103" y="16" width="2" height="3" fill="#777"/>
<path d="M122 4h14l2 2v14h-16z" fill="#c6c6c6"/><rect x="125" y="4" width="9" height="6" fill="#f2f2f2"/><rect x="125" y="14" width="10" height="6" fill="#efefef"/><rect x="127" y="16" width="2" height="3" fill="#777"/>
<path d="M130 17l6 -7l3 3l-6 7h-3z" fill="#e8b45e"/><path d="M136 10l1.500 -1.800l3 3l-1.500 1.800z" fill="#b5653a"/>
<rect x="147.500" y="4.500" width="9.500" height="15" rx="1.500" fill="#4a4a4a" stroke="#d8d8d8" stroke-width="1.300"/><path d="M154 13.500h3l1 1h4v5h-8z" fill="#f5c452"/>
<rect x="174.500" y="4.500" width="9.500" height="15" rx="1.500" fill="#4a4a4a" stroke="#d8d8d8" stroke-width="1.300"/><path d="M171 8.500h5v-2.500l4.500 4l-4.500 4v-2.500h-5z" fill="#3aa0e8"/>
<path d="M197 4h10v5h-10z" fill="#fff"/><path d="M194 8.500h16v8h-16z" fill="#f2f2f2"/><path d="M197 14h10v6h-10z" fill="#6db9f2"/>
<path d="M226 11l5.500 -4.500v3c4 0 6 2 6.500 5.500c-1.500 -2 -3.500 -2.500 -6.500 -2.500v3z" fill="#b9b9b9"/><path d="M241 10h5l-2.500 3z" fill="#b5b5b5"/>
<path d="M268 11l-5.500 -4.500v3c-4 0 -6 2 -6.500 5.500c1.500 -2 3.500 -2.500 6.500 -2.500v3z" fill="#b9b9b9"/><path d="M277 10h5l-2.500 3z" fill="#b5b5b5"/>
<path d="M291 5h10v3h-10zM291 10h7v2h-7zM291 14h6v2h-6z" fill="#f4f4f4"/><path d="M297 13l5 -3l3 4l-5 4z" fill="#e8b45e"/><path d="M300 6l3 2.500l-3 2.500" stroke="#333" fill="none"/>
<path d="M316 4h10v5h-10z" fill="#fff"/><path d="M313 8.500h16v7h-16z" fill="#f2f2f2"/><path d="M316 13.500h10v6h-10z" fill="#fff"/><path d="M320 16.500h7v-2l4 3l-4 3v-2h-7z" fill="#3aa0e8"/>
<path d="M337 7.500h8" stroke="#fff" stroke-width="1.500"/><path d="M337.500 11h7l-3.500 4z" fill="#fff"/>
<path d="M1314.500 8l4.500 4l-4.500 4z" fill="#f2f2f2"/>
<g fill="#2c2c2c"><rect x="1510" y="9" width="5" height="9" rx="1.500"/><rect x="1517" y="9" width="5" height="9" rx="1.500"/><rect x="1511" y="5" width="3.500" height="5"/><rect x="1517.500" y="5" width="3.500" height="5"/><rect x="1514" y="8" width="4" height="3"/></g>
<circle cx="1539.500" cy="8.500" r="4" fill="#f4f4f4" stroke="#333" stroke-width="1"/><path d="M1532 19.500c0 -5 3 -7 7.500 -7s7.500 2 7.500 7z" fill="#f4f4f4" stroke="#333" stroke-width="1"/>
<path d="M1638 10h5.500l-2.800 3.500z" fill="#e8e8e8"/>
<path d="M1654 5h3l2 9h9l2 -6.500h-12.500" stroke="#222" stroke-width="1.600" fill="none"/><circle cx="1660" cy="17.500" r="1.700" fill="#222"/><circle cx="1667" cy="17.500" r="1.700" fill="#222"/>
<path d="M1686.500 5l7 11.500h-14z" fill="none" stroke="#222" stroke-width="1.800"/><path d="M1682 13.500c3 -3 6 -3 9 0" stroke="#222" fill="none" stroke-width="1.400"/><path d="M1699 10h5.500l-2.800 3.500z" fill="#e8e8e8"/>
<path d="M1713.500 2v19" stroke="#9c9c9c"/><circle cx="1732.500" cy="12" r="7" fill="#f4f4f4" stroke="#222" stroke-width="1.500"/><text x="1729" y="16.500" font-size="12" font-weight="bold" fill="#222">?</text><path d="M1747 10h5.500l-2.800 3.500z" fill="#e8e8e8"/>
<path d="M1799 12.500h11.500M1890.500 6.500l10.500 10.500m0 -10.500l-10.500 10.500" stroke="#f0f0f0" stroke-width="1.300" fill="none"/><path d="M1845.500 9h8v8h-8zM1847.500 9v-2.500h8.500v8.500h-2.500" stroke="#f0f0f0" stroke-width="1.200" fill="none"/>
<rect x="809" y="30" width="12" height="8" rx="2" fill="#e8e8e8"/><path d="M812 36l3 -3.500l3 3.500z" fill="#333"/><path d="M826 33h6l-3 3.500z" fill="#e8e8e8"/>
<path d="M8.500 82.500L37.500 53.500" stroke="#ececec" stroke-width="1.400"/>
<rect x="6.8" y="80.8" width="3.400" height="3.400" fill="#55b4f2"/>
<rect x="35.8" y="51.8" width="3.400" height="3.400" fill="#55b4f2"/>
<rect x="50.0" y="73.6" width="3.400" height="3.400" fill="#55b4f2"/>
<rect x="69.8" y="73.6" width="3.400" height="3.400" fill="#55b4f2"/>
<rect x="69.8" y="58.8" width="3.400" height="3.400" fill="#55b4f2"/>
<rect x="113.8" y="65.8" width="3.400" height="3.400" fill="#55b4f2"/>
<rect x="147.8" y="79.89999999999999" width="3.400" height="3.400" fill="#55b4f2"/>
<rect x="155.9" y="60.8" width="3.400" height="3.400" fill="#55b4f2"/>
<rect x="174.9" y="52.699999999999996" width="3.400" height="3.400" fill="#55b4f2"/>
<path d="M54 75.300H70M74 75.300c10 0 10 -14.800 0 -14.800" stroke="#ececec" stroke-width="1.400" fill="none"/>
<circle cx="115.500" cy="67.500" r="15.300" fill="none" stroke="#ececec" stroke-width="1.300"/><path d="M117 66L124 59M120 58.500h4.500v4.500" stroke="#55b4f2" stroke-width="1.300" fill="none"/>
<path d="M149.500 79.500C151 67 160 56.500 174.500 54.600" stroke="#ececec" stroke-width="1.400" fill="none"/>
<rect x="188.500" y="56.500" width="13.500" height="9.500" fill="none" stroke="#ececec" stroke-width="1.300"/><rect x="187" y="55" width="2.600" height="2.600" fill="#55b4f2"/><rect x="200.800" y="64.800" width="2.600" height="2.600" fill="#55b4f2"/>
<ellipse cx="194.200" cy="84.900" rx="7" ry="4.600" fill="none" stroke="#ececec" stroke-width="1.300" stroke-dasharray="5 1.500"/><rect x="193.200" y="83.900" width="2" height="2" fill="#55b4f2"/><rect x="199.800" y="83.900" width="2" height="2" fill="#55b4f2"/><rect x="193.200" y="78.800" width="2" height="2" fill="#55b4f2"/>
<path d="M187 104h16.500M187 114.500h16.500M189.600 101.500v16M200.800 101.500v16" stroke="#ececec" stroke-width="1.200"/><path d="M191 111l6 -6M193 113l6.500 -6.500M196 113.500l4 -4" stroke="#55b4f2" stroke-width="1.200"/>
<path d="M240.500 53.500v14M233.500 60.500h14M238 56l2.500 -3l2.500 3M238 65l2.500 3l2.500 -3M236 58l-3 2.500l3 2.500M245 58l3 2.500l-3 2.500" stroke="#ececec" stroke-width="1.500" fill="none"/>
<circle cx="236.700" cy="80.600" r="3" fill="none" stroke="#ececec" stroke-width="1.200"/><path d="M242 79h4v4M244.500 82l1.500 1.800l1.500 -1.800" stroke="#ececec" stroke-width="1.200" fill="none"/><circle cx="240" cy="89.500" r="3" fill="none" stroke="#55b4f2" stroke-width="1.300"/><circle cx="245" cy="89.500" r="3" fill="none" stroke="#55b4f2" stroke-width="1.300"/>
<path d="M239 108v-6.500h-5.800v15.300h5.800v-3" stroke="#ececec" stroke-width="1.300" fill="none"/><path d="M242 101.500h2.500l4.200 15.300h-7" stroke="#55b4f2" stroke-width="1.300" fill="none"/><path d="M237 112.500h6M241.500 110.500l2 2l-2 2" stroke="#ececec" stroke-width="1.200" fill="none"/>
<path d="M316.500 56.500a6.600 6.600 0 1 1 -5 -0.800" stroke="#ececec" stroke-width="1.500" fill="none"/><path d="M313.500 53l4.500 3l-4.500 3z" fill="#ececec"/>
<path d="M305.400 91.500h6v-12.200z" stroke="#ececec" stroke-width="1.200" fill="none"/><path d="M313.400 79.300v12.200h6.200z" stroke="#55b4f2" stroke-width="1.200" fill="none"/>
<rect x="305.400" y="108.500" width="8" height="8" fill="none" stroke="#ececec" stroke-width="1.300"/><path d="M305.400 106v-4.100h15.300v14.600h-4.500" stroke="#55b4f2" stroke-width="1.300" fill="none"/>
<path d="M373.800 54.600h8" stroke="#55b4f2" stroke-width="1.300" stroke-dasharray="1.500 1.200"/><path d="M386 54.600h4.500M384 53v8M378 57l9.500 10.500" stroke="#ececec" stroke-width="1.400" fill="none"/><circle cx="383.300" cy="66.500" r="2" fill="none" stroke="#ececec" stroke-width="1.200"/><circle cx="387.600" cy="64.500" r="2" fill="none" stroke="#ececec" stroke-width="1.200"/>
<path d="M374.500 86.200c0 -5 4 -8.600 8.600 -8.600" stroke="#55b4f2" stroke-width="1.400" fill="none"/><path d="M385 77.600h5M374.500 88.500v4.500" stroke="#ececec" stroke-width="1.300"/>
<rect x="375.2" y="102.8" width="4.700" height="4.700" fill="none" stroke="#ececec" stroke-width="1.300"/>
<rect x="383.8" y="102.8" width="4.700" height="4.700" fill="none" stroke="#55b4f2" stroke-width="1.300"/>
<rect x="375.2" y="110.8" width="4.700" height="4.700" fill="none" stroke="#55b4f2" stroke-width="1.300"/>
<rect x="383.8" y="110.8" width="4.700" height="4.700" fill="none" stroke="#55b4f2" stroke-width="1.300"/>
<path d="M452 66l9 -11l4 3l-9 11z" fill="#f3d9a8"/><path d="M461 55l2 -2.500l4 3l-2 2.500z" fill="#f0a04a"/><path d="M452 66l4 3l-1.500 1.500h-3.500z" fill="#a85a32"/><path d="M449 69h4" stroke="#ececec" stroke-width="1.200"/><path d="M456 69.500h9.500" stroke="#55b4f2" stroke-width="1.200"/>
<rect x="451.500" y="82.500" width="9" height="9" fill="none" stroke="#ececec" stroke-width="1.300"/><path d="M449.600 82.500v9.700M451.500 82.500l4 -4h9.500l-4.500 4M465 78.500v9l-4.500 4" stroke="#55b4f2" stroke-width="1.300" fill="none"/>
<path d="M465.500 103.200h-9a5.600 5.600 0 0 0 0 11.200h9M465.500 106.200h-8.500a2.700 2.700 0 0 0 0 5.400h8.500" stroke="#55b4f2" stroke-width="1.400" fill="none"/>
<defs><linearGradient id="tb" x1="0" y1="0" x2="0" y2="1"><stop offset="0" stop-color="#858585"/><stop offset="1" stop-color="#676767"/></linearGradient><linearGradient id="dd" x1="0" y1="0" x2="0" y2="1"><stop offset="0" stop-color="#6c6c6c"/><stop offset="1" stop-color="#4e4e4e"/></linearGradient><linearGradient id="gs" x1="0" y1="0" x2="0" y2="1"><stop offset="0" stop-color="#3d4fa0"/><stop offset="1" stop-color="#7fa0d4"/></linearGradient></defs>
<rect x="478.500" y="49.500" width="42" height="71" fill="url(#tb)" stroke="#2e2e2e"/><path d="M479 86.500h41" stroke="#3a3a3a"/><path d="M479 87.500h41" stroke="#8a8a8a" stroke-width=".6"/>
<text x="486" y="81.500" font-size="38" fill="#e2e2e2" textLength="27.500" lengthAdjust="spacingAndGlyphs">A</text>
<path d="M536.400 52.300v31.200M567.600 52.300v31.200M538 58.300h28M541.500 56l-3.500 2.300l3.500 2.300M562.500 56l3.500 2.300l-3.500 2.300" stroke="#ececec" stroke-width="1.200" fill="none"/>
<g fill="#f7c66e"><path d="M551.300 73.500l.8 -6l.8 6z"/><path d="M546.500 75.500l-3.500 -4.500l5 3.500z"/><path d="M557.500 75.500l3.500 -4.500l-5 3.500z"/><path d="M544.500 80.500l-5 -1l5 -1.500z"/><path d="M559.500 80.500l5 -1l-5 -1.500z"/></g>
<path d="M589.300 54v13.600M604.600 54v13.600" stroke="#ececec" stroke-width="1.200"/><path d="M590.500 58.300h13M592.500 56.800l-2 1.500l2 1.500M601.500 56.800l2 1.500l-2 1.500" stroke="#55b4f2" stroke-width="1.200" fill="none"/>
<circle cx="601.200" cy="81.500" r="3.200" fill="none" stroke="#ececec" stroke-width="1.200"/><path d="M598 82.500l-3 1.500l-4.500 7" stroke="#ececec" stroke-width="1.200" fill="none"/><path d="M589.300 92.300l1 -4.300l2.800 2z" fill="#ececec"/>
<path d="M589.500 102.500h15v13h-15zM589.500 106h15M589.500 109.200h15M589.500 112.400h15M594.500 106v9.500M599.500 106v9.500" stroke="#ececec" stroke-width="1.200" fill="none"/>
<path d="M688 58l8 -6h11l-8 6z" fill="#d9d9d9"/><path d="M684 65l5 -4h12l4 -3h3l-9 7z" fill="#c4c4c4"/><path d="M681 72l5 -4h13v4z" fill="#d0d0d0"/><rect x="699" y="65.500" width="13" height="18" fill="#f4f4f4"/><rect x="701" y="68" width="9" height="6.500" fill="#5bb3f0"/><path d="M702 77.500h7M702 80.500h7" stroke="#555" stroke-width="1"/>
<circle cx="739" cy="59" r="5.200" fill="#fbd28c"/><rect x="736.500" y="64.500" width="5" height="3.500" rx="1" fill="#f2f2f2"/>
<circle cx="757.300" cy="60.700" r="4.200" fill="#fbd28c"/><path d="M757.300 53v2.500M757.300 66v2.500M749.600 60.700h2.500M762.500 60.700h2.500M751.900 55.300l1.800 1.800M761 64.300l1.800 1.800M751.900 66.100l1.800 -1.800M761 57.100l1.800 -1.800" stroke="#fbd28c" stroke-width="1.200"/>
<rect x="770.200" y="59" width="10.600" height="9" fill="#fbd28c"/><rect x="774.700" y="62" width="1.800" height="3.200" fill="#5c5c5c"/><path d="M776.500 59v-2.500a3.300 3.300 0 0 1 6.600 0v1.500" stroke="#fbd28c" stroke-width="1.700" fill="none"/>
<path d="M731 83l5 -5h8l-5 5z" fill="#d2d2d2"/>
<circle cx="743.600" cy="86.200" r="3.500" fill="#6bbcf3"/><rect x="742" y="89.500" width="3.200" height="2.500" fill="#f4f4f4"/>
<path d="M755 81l4.500 -4h8.500l-4.500 4z" fill="#cfcfcf"/>
<path d="M755 84l4.500 -4h8.500l-4.500 4z" fill="#f0f0f0"/>
<path d="M755 87l4.500 -4h8.500l-4.500 4z" fill="#6bbcf3"/>
<path d="M771 86l-5 5M766 87.500v3.500h3.500" stroke="#ececec" stroke-width="1.300" fill="none"/>
<path d="M779 83l5 -5h8l-5 5z" fill="#d2d2d2"/>
<path d="M790.500 84v8.500M786.800 86.100l7.400 4.300M786.800 90.400l7.400 -4.300" stroke="#6bbcf3" stroke-width="1.200"/>
<path d="M803 83l5 -5h8l-5 5z" fill="#d2d2d2"/>
<rect x="811.800" y="87" width="7" height="5.500" fill="#6bbcf3"/><path d="M813.300 87v-1.500a2 2 0 0 1 4 0v1.500" stroke="#6bbcf3" stroke-width="1.300" fill="none"/>
<path d="M827.500 85l5 -4.500h10.500l-5 4.500z" fill="#6bbcf3"/><path d="M827.500 88.500h10.500l5 -4.500M827.500 91.500h10.500l5 -4.500" stroke="#e4e4e4" stroke-width="1.500" fill="none"/><circle cx="835" cy="80" r="3" fill="#c9c9c9"/>
<path d="M731 105l4.500 -4h8.500l-4.500 4z" fill="#cfcfcf"/>
<path d="M731 108l4.500 -4h8.500l-4.500 4z" fill="#dedede"/>
<path d="M731 111l4.500 -4h8.500l-4.500 4z" fill="#f0f0f0"/>
<circle cx="743.600" cy="110.200" r="3.500" fill="#fbd28c"/><rect x="742" y="113.500" width="3.200" height="2.500" fill="#f4f4f4"/>
<path d="M755 105l4.500 -4h8.500l-4.500 4z" fill="#cfcfcf"/>
<path d="M755 108l4.500 -4h8.500l-4.500 4z" fill="#f0f0f0"/>
<path d="M755 111l4.500 -4h8.500l-4.500 4z" fill="#6bbcf3"/>
<path d="M765.500 116l5.500 -5.500M767.500 110.500h3.500v3.500" stroke="#ececec" stroke-width="1.300" fill="none"/>
<path d="M779 105l4.500 -4h8.500l-4.500 4z" fill="#cfcfcf"/>
<path d="M779 108l4.500 -4h8.500l-4.500 4z" fill="#dedede"/>
<path d="M779 111l4.500 -4h8.500l-4.500 4z" fill="#f0f0f0"/>
<circle cx="790.500" cy="112.200" r="2.600" fill="#fbd28c"/><circle cx="790.500" cy="112.200" r="4.600" fill="none" stroke="#fbd28c" stroke-width="1.200" stroke-dasharray="1.200 1.700"/>
<path d="M803 107l5 -5h8l-5 5z" fill="#d2d2d2"/>
<rect x="810.500" y="111.500" width="7" height="5.500" fill="#fbd28c"/><path d="M815.500 111.500v-1.500a2 2 0 0 1 4 0v1" stroke="#fbd28c" stroke-width="1.300" fill="none"/>
<path d="M827.5 105l4.500 -4h8.500l-4.500 4z" fill="#cfcfcf"/>
<path d="M827.5 108l4.500 -4h8.500l-4.500 4z" fill="#dedede"/>
<path d="M827.5 111l4.500 -4h8.500l-4.500 4z" fill="#f0f0f0"/>
<path d="M834 112l4 -3l4 5l-4 3z" fill="#fbd28c"/><path d="M838 109l2.500 -2l4 5l-2.500 2z" fill="#f4f4f4"/>
<path d="M958.500 50h12l4.500 4.500v19h-16.500z" fill="#8fcaf6"/><path d="M970.500 50v4.500h4.500z" fill="#d6ecfb"/><rect x="944.500" y="60.500" width="20.500" height="14" fill="#777" stroke="#d8d8d8" stroke-width="1.200"/><circle cx="964.600" cy="74.500" r="7" fill="#7d7d7d" fill-opacity=".6" stroke="#d8d8d8" stroke-width="1.200"/><rect x="943" y="73" width="3" height="3" fill="#d8d8d8"/>
<path d="M984 59h9.500v7h-9.500z" fill="#7c7c7c" stroke="#d4d4d4" stroke-width="1.100"/><circle cx="993.600" cy="65.6" r="3" fill="#7c7c7c" stroke="#d4d4d4" stroke-width="1.100"/><rect x="982.800" y="65" width="2" height="2" fill="#d4d4d4"/>
<path d="M984 83h9.500v7h-9.500z" fill="#7c7c7c" stroke="#d4d4d4" stroke-width="1.100"/><circle cx="993.600" cy="89.6" r="3" fill="#7c7c7c" stroke="#d4d4d4" stroke-width="1.100"/><rect x="982.800" y="89" width="2" height="2" fill="#d4d4d4"/>
<path d="M995 53l1 3l3 -1.500l-1.800 2.800l3 1l-3 1l1.800 2.800l-3 -1.500l-1 3l-1 -3l-3 1.500l1.800 -2.800l-3 -1l3 -1l-1.800 -2.800l3 1.500z" fill="#f7c66e"/>
<path d="M990 84l6 -6.500l3 2.500l-6 6.500l-3.500 .800z" fill="#f3d9a8"/><path d="M996 77.500l1.500 -1.700l3 2.500l-1.500 1.700z" fill="#c8743c"/>
<path d="M983.500 102.500h8.500l5.500 6l-7.500 7l-6.500 -6z" fill="#ececec"/><circle cx="986.500" cy="106" r="1.200" fill="#555"/><path d="M989 110l6 -6.500l3 2.500l-6 6.500l-3.500 .800z" fill="#f3d9a8" stroke="#555" stroke-width=".5"/><path d="M995 103.500l1.500 -1.700l3 2.500l-1.500 1.700z" fill="#c8743c"/>
<rect x="1116" y="52" width="20" height="28" fill="#dcdcdc"/><rect x="1119" y="54.600" width="12.600" height="9.300" fill="#8fcaf6" stroke="#555" stroke-width=".8"/><path d="M1119 69h11M1119 74.500h11M1123 67v4M1127 72.500v4" stroke="#555" stroke-width="1"/><path d="M1130 75l6 -5l7 9l-6 5z" fill="#f8cf85"/><path d="M1136 70l3.500 -3l1.500 -3.500l3 2l-1 3.500l-0.500 1l3 4l-3 2.500z" fill="#f2f2f2"/>
<path d="M1171 59.900L1171.0 51.9A8 8 0 0 1 1177.9 55.9z" fill="#e8d24a"/>
<path d="M1171 59.900L1177.9 55.9A8 8 0 0 1 1177.9 63.9z" fill="#d9a35c"/>
<path d="M1171 59.900L1177.9 63.9A8 8 0 0 1 1171.0 67.9z" fill="#d8433a"/>
<path d="M1171 59.900L1171.0 67.9A8 8 0 0 1 1164.1 63.9z" fill="#6b4fe0"/>
<path d="M1171 59.900L1164.1 63.9A8 8 0 0 1 1164.1 55.9z" fill="#2aa7e0"/>
<path d="M1171 59.900L1164.1 55.9A8 8 0 0 1 1171.0 51.9z" fill="#5fc26a"/>
<path d="M1163 77h16" stroke="#e0e0e0" stroke-width="2"/><path d="M1163 83.500h16" stroke="#e0e0e0" stroke-width="3"/><path d="M1163 90h16" stroke="#e0e0e0" stroke-width="4"/>
<path d="M1163 101.500h16" stroke="#e0e0e0" stroke-width="1.300" stroke-dasharray="1.200 1.200"/><path d="M1163 105.500h16" stroke="#e0e0e0" stroke-width="1.300" stroke-dasharray="3 1.200"/><path d="M1163 109.500h16" stroke="#e0e0e0" stroke-width="1.300" stroke-dasharray="5 1.200 1.200 1.200"/><path d="M1163 113.400h16" stroke="#e0e0e0" stroke-width="1.300" stroke-dasharray="2.200 1.200"/>
<path d="M1353.500 131.500l4 4M1357.500 132.500v3h-3" stroke="#e4e4e4" stroke-width="1.200" fill="none"/><path d="M1660.500 131.500l4 4M1664.500 132.500v3h-3" stroke="#e4e4e4" stroke-width="1.200" fill="none"/>
<path d="M1374 56h-4.500v27h4.500M1386.500 83h4.500v-12" stroke="#ececec" stroke-width="1.700" fill="none"/><path d="M1375 61h3l1.500 1.500h5.500v5.500h-10z" fill="#5bb3f0"/><path d="M1376.500 63h7v3.500h-7z" fill="#6a6a6a" stroke="#bfe0f8" stroke-width=".6" stroke-dasharray="1 1"/><circle cx="1379.700" cy="75" r="4.600" fill="#9a9a9a" stroke="#c4c4c4" stroke-width="1.200"/>
<path d="M1391.700 53l1.500 5l4.500 -2.500l-2.500 4.500l5 1.500l-5 1.500l2.500 4.500l-4.500 -2.500l-1.500 5l-1.500 -5l-4.500 2.500l2.500 -4.500l-5 -1.500l5 -1.500l-2.500 -4.500l4.500 2.500z" fill="#f7c66e"/>
<rect x="1412.500" y="55.500" width="4.500" height="4" fill="none" stroke="#55b4f2" stroke-width="1.100"/><circle cx="1415" cy="64.500" r="2.400" fill="#9a9a9a" stroke="#c4c4c4" stroke-width=".8"/><path d="M1420 53.500h2.500v15h-2.500" stroke="#ececec" stroke-width="1.200" fill="none"/><path d="M1420.500 59l5 5m0 -5l-5 5" stroke="#e0864a" stroke-width="1.400"/>
<path d="M1413.500 78h-2.500v13.500h2.500M1418.500 78h2.500v6" stroke="#ececec" stroke-width="1.200" fill="none"/><rect x="1413.800" y="80" width="4" height="3.500" fill="none" stroke="#55b4f2" stroke-width="1.100"/><circle cx="1416" cy="87.500" r="2.300" fill="#9a9a9a" stroke="#c4c4c4" stroke-width=".8"/><path d="M1418.500 91l5 -5.500l2.500 2l-5 5.500l-3 .500z" fill="#f3d9a8"/><path d="M1423.500 85.500l1 -1.200l2.500 2l-1 1.200z" fill="#c8743c"/>
<rect x="1406.500" y="98.500" width="23" height="21" fill="url(#gs)" stroke="#2c3560"/><path d="M1413.500 102h-2.500v13.500h2.500M1418.500 102h2.500v3" stroke="#ececec" stroke-width="1.200" fill="none"/><rect x="1413.800" y="104" width="4" height="3.500" fill="none" stroke="#6fd06a" stroke-width="1.100"/><circle cx="1416" cy="111.500" r="2.300" fill="none" stroke="#6fd06a" stroke-width="1.100"/><path d="M1420 106v10l2.500 -2.200l1.800 3.700l1.500 -.7l-1.800 -3.600h3.300z" fill="#fff"/>
<path d="M1455 60v9M1483 60v9M1456.500 64.700h25M1459.500 62.700l-3 2l3 2M1478.500 62.700l3 2l-3 2" stroke="#ececec" stroke-width="1.200" fill="none"/><rect x="1455" y="70" width="28" height="6" fill="#f7c66e"/><path d="M1458 70v3M1461 70v2M1464 70v3M1467 70v2M1470 70v3M1473 70v2M1476 70v3M1479 70v2" stroke="#a87a30" stroke-width=".8"/>
<path d="M1507 57v10l2.500 -2.200l1.800 3.700l1.500 -.7l-1.800 -3.600h3.300z" fill="#fff"/><path d="M1514.500 53l-2.500 4h2l-1 3.500l4 -5h-2.200l1.200 -2.500z" fill="#f7c66e"/><rect x="1514.500" y="61" width="8.500" height="7.500" fill="#f2f2f2"/><path d="M1516 63h1.200M1518 63h3.500M1516 65h1.200M1518 65h3.500M1516 67h1.200M1518 67h3.500" stroke="#3a8fd0" stroke-width="1"/>
<rect x="1507.500" y="78" width="14" height="14" rx="1.500" fill="none" stroke="#5fd06a" stroke-width="1.200" stroke-dasharray="1.600 1"/><rect x="1509.500" y="82" width="6" height="7.500" fill="none" stroke="#5fd06a" stroke-width="1.600"/><rect x="1513" y="80" width="6" height="7.500" fill="#5fd06a"/><path d="M1516 82v10l2.500 -2.200l1.800 3.700l1.500 -.7l-1.800 -3.600h3.300z" fill="#fff" stroke="#444" stroke-width=".4"/>
<rect x="1508.700" y="101.300" width="12" height="15.700" fill="#e2e2e2"/><rect x="1510.200" y="103" width="9" height="3" fill="#6a6a6a"/><g fill="#6a6a6a"><rect x="1510.200" y="107.500" width="2" height="2"/><rect x="1513.700" y="107.500" width="2" height="2"/><rect x="1517.200" y="107.500" width="2" height="2"/><rect x="1510.200" y="110.700" width="2" height="2"/><rect x="1513.700" y="110.700" width="2" height="2"/><rect x="1517.200" y="110.700" width="2" height="2"/><rect x="1510.200" y="113.900" width="2" height="2"/><rect x="1513.700" y="113.900" width="2" height="2"/><rect x="1517.200" y="113.900" width="2" height="2"/></g>
<rect x="1543.800" y="55" width="22" height="25" fill="#dcaa6c"/><rect x="1551" y="52.500" width="8" height="4.500" rx="1" fill="#f0f0f0"/><path d="M1552.200 62.500h12.500l5.300 5v16.700h-17.800z" fill="#e6e6e6"/><path d="M1564.700 62.500v5h5.300z" fill="#bdbdbd"/>
<path d="M1587.500 53.500h10v11h-10z" fill="#dadada"/><path d="M1589 56.500h7M1589 59h7M1589 61.500h4" stroke="#666" stroke-width="1"/><path d="M1595 58.500l6 7M1601 58.500l-6 7" stroke="#f0f0f0" stroke-width="1.200"/><circle cx="1595" cy="67" r="1.700" fill="none" stroke="#f0f0f0" stroke-width="1"/><circle cx="1601" cy="67" r="1.700" fill="none" stroke="#f0f0f0" stroke-width="1"/>
<path d="M1588 77.500h6.500l2 2v9h-8.500z" fill="#bdbdbd"/><path d="M1591.500 81h6.500l2.800 2.500v9h-9.300z" fill="#dedede"/>
<path d="M1624.700 55.800h14.100v10h17.900v14.200h-32z" fill="#d8d8d8"/>
<text x="93.3" y="137" textLength="26.7" lengthAdjust="spacingAndGlyphs">Draw</text>
<path d="M126.0 131h8l-4.0 4.5z" fill="#f2f2f2"/>
<text x="325.0" y="137" textLength="37.7" lengthAdjust="spacingAndGlyphs">Modify</text>
<path d="M368.7 131h8l-4.0 4.5z" fill="#f2f2f2"/>
<text x="532.7" y="137" textLength="60.0" lengthAdjust="spacingAndGlyphs">Annotation</text>
<path d="M598.7 131h8l-4.0 4.5z" fill="#f2f2f2"/>
<text x="778.3" y="137" textLength="32.4" lengthAdjust="spacingAndGlyphs">Layers</text>
<path d="M816.7 131h8l-4.0 4.5z" fill="#f2f2f2"/>
<text x="997.3" y="137" textLength="28.0" lengthAdjust="spacingAndGlyphs">Block</text>
<path d="M1031.3 131h8l-4.0 4.5z" fill="#f2f2f2"/>
<text x="1191.7" y="137" textLength="52.3" lengthAdjust="spacingAndGlyphs">Properties</text>
<path d="M1250.3 131h8l-4.0 4.5z" fill="#f2f2f2"/>
<text x="1372.3" y="137" textLength="37.7" lengthAdjust="spacingAndGlyphs">Groups</text>
<path d="M1416.0 131h8l-4.0 4.5z" fill="#f2f2f2"/>
<text x="1454.7" y="137" textLength="38.6" lengthAdjust="spacingAndGlyphs">Utilities</text>
<path d="M1499.3 131h8l-4.0 4.5z" fill="#f2f2f2"/>
<text x="1544.3" y="137" textLength="51.7" lengthAdjust="spacingAndGlyphs">Clipboard</text>
<text x="1615.3" y="137" textLength="24.7" lengthAdjust="spacingAndGlyphs">View</text>
<path d="M1646.0 131h8l-4.0 4.5z" fill="#f2f2f2"/>
<path d="M46 45V28.5a2 2 0 0 1 2-2H94a2 2 0 0 1 2 2V45z" fill="#5f5f5f" stroke="#2e2e2e" stroke-width="1"/><rect x="47" y="43" width="48.500" height="4" fill="#5f5f5f"/>
<text x="55.0" y="39" textLength="33.3" lengthAdjust="spacingAndGlyphs">Home</text>
<text x="108.0" y="39" textLength="28.7" lengthAdjust="spacingAndGlyphs">Insert</text>
<text x="157.3" y="39" textLength="48.7" lengthAdjust="spacingAndGlyphs">Annotate</text>
<text x="226.0" y="39" textLength="56.7" lengthAdjust="spacingAndGlyphs">Parametric</text>
<text x="302.7" y="39" textLength="25.3" lengthAdjust="spacingAndGlyphs">View</text>
<text x="348.0" y="39" textLength="43.0" lengthAdjust="spacingAndGlyphs">Manage</text>
<text x="411.0" y="39" textLength="37.7" lengthAdjust="spacingAndGlyphs">Output</text>
<text x="469.0" y="39" textLength="41.7" lengthAdjust="spacingAndGlyphs">Add-ins</text>
<text x="531.0" y="39" textLength="60.7" lengthAdjust="spacingAndGlyphs">Collaborate</text>
<text x="612.0" y="39" textLength="75.7" lengthAdjust="spacingAndGlyphs">Featured Apps</text>
<text x="708.3" y="39" textLength="68.4" lengthAdjust="spacingAndGlyphs">Express Tools</text>
<text x="12.0" y="99" textLength="22.0" lengthAdjust="spacingAndGlyphs">Line</text>
<text x="45.3" y="99" textLength="42.0" lengthAdjust="spacingAndGlyphs">Polyline</text>
<text x="101.0" y="99" textLength="29.7" lengthAdjust="spacingAndGlyphs">Circle</text>
<text x="152.7" y="99" textLength="18.0" lengthAdjust="spacingAndGlyphs">Arc</text>
<text x="489.3" y="99" textLength="20.0" lengthAdjust="spacingAndGlyphs">Text</text>
<text x="524.0" y="99" textLength="56.7" lengthAdjust="spacingAndGlyphs">Dimension</text>
<text x="683.3" y="99" textLength="27.4" lengthAdjust="spacingAndGlyphs">Layer</text>
<text x="1114.0" y="99" textLength="32.7" lengthAdjust="spacingAndGlyphs">Match</text>
<text x="1369.3" y="99" textLength="32.7" lengthAdjust="spacingAndGlyphs">Group</text>
<text x="1446.7" y="99" textLength="44.6" lengthAdjust="spacingAndGlyphs">Measure</text>
<text x="1543.3" y="99" textLength="28.0" lengthAdjust="spacingAndGlyphs">Paste</text>
<text x="1629.3" y="99" textLength="24.0" lengthAdjust="spacingAndGlyphs">Base</text>
<text x="945.0" y="98" textLength="29.0" lengthAdjust="spacingAndGlyphs">Insert</text>
<text x="670.0" y="114" textLength="52.7" lengthAdjust="spacingAndGlyphs">Properties</text>
<text x="1104.0" y="114" textLength="52.0" lengthAdjust="spacingAndGlyphs">Properties</text>
<path d="M112.5 105h6l-3.0 3.5z" fill="#f2f2f2"/>
<path d="M158.5 105h6l-3.0 3.5z" fill="#f2f2f2"/>
<path d="M496.0 105h6l-3.0 3.5z" fill="#f2f2f2"/>
<path d="M956.0 104h6l-3.0 3.5z" fill="#f2f2f2"/>
<path d="M1465.0 105h6l-3.0 3.5z" fill="#f2f2f2"/>
<path d="M1554.0 105h6l-3.0 3.5z" fill="#f2f2f2"/>
<path d="M1638.0 105h6l-3.0 3.5z" fill="#f2f2f2"/>
<text x="254.0" y="65" textLength="30.0" lengthAdjust="spacingAndGlyphs">Move</text>
<text x="326.0" y="65" textLength="34.0" lengthAdjust="spacingAndGlyphs">Rotate</text>
<text x="395.0" y="65" textLength="22.3" lengthAdjust="spacingAndGlyphs">Trim</text>
<text x="610.0" y="65" textLength="32.0" lengthAdjust="spacingAndGlyphs">Linear</text>
<text x="1004.0" y="65" textLength="33.3" lengthAdjust="spacingAndGlyphs">Create</text>
<text x="254.0" y="89" textLength="27.7" lengthAdjust="spacingAndGlyphs">Copy</text>
<text x="326.0" y="89" textLength="32.7" lengthAdjust="spacingAndGlyphs">Mirror</text>
<text x="395.0" y="89" textLength="24.3" lengthAdjust="spacingAndGlyphs">Fillet</text>
<text x="610.0" y="89" textLength="35.0" lengthAdjust="spacingAndGlyphs">Leader</text>
<text x="848.3" y="89" textLength="71.0" lengthAdjust="spacingAndGlyphs">Make Current</text>
<text x="1004.0" y="89" textLength="19.3" lengthAdjust="spacingAndGlyphs">Edit</text>
<text x="254.0" y="113" textLength="36.7" lengthAdjust="spacingAndGlyphs">Stretch</text>
<text x="326.0" y="113" textLength="26.7" lengthAdjust="spacingAndGlyphs">Scale</text>
<text x="395.0" y="113" textLength="27.7" lengthAdjust="spacingAndGlyphs">Array</text>
<text x="610.0" y="113" textLength="26.7" lengthAdjust="spacingAndGlyphs">Table</text>
<text x="848.3" y="113" textLength="64.4" lengthAdjust="spacingAndGlyphs">Match Layer</text>
<text x="1004.0" y="113" textLength="74.3" lengthAdjust="spacingAndGlyphs">Edit Attributes</text>
<path d="M209.5 59.5h5l-2.5 3z" fill="#f2f2f2"/>
<path d="M209.5 83.5h5l-2.5 3z" fill="#f2f2f2"/>
<path d="M209.5 107.5h5l-2.5 3z" fill="#f2f2f2"/>
<path d="M428.5 59.5h5l-2.5 3z" fill="#f2f2f2"/>
<path d="M430.5 83.5h5l-2.5 3z" fill="#f2f2f2"/>
<path d="M430.5 107.5h5l-2.5 3z" fill="#f2f2f2"/>
<path d="M649.5 59.5h5l-2.5 3z" fill="#f2f2f2"/>
<path d="M652.5 83.5h5l-2.5 3z" fill="#f2f2f2"/>
<path d="M1086.5 107.5h5l-2.5 3z" fill="#f2f2f2"/>
<text x="809.3" y="65" textLength="48.0" lengthAdjust="spacingAndGlyphs">Tulangan</text>
<path d="M925.0 58h8l-4.0 4.5z" fill="#f2f2f2"/>
<path d="M1350.8 58.5h7.5l-3.8 4z" fill="#f2f2f2"/>
<path d="M1350.8 82.5h7.5l-3.8 4z" fill="#f2f2f2"/>
<path d="M1350.8 105.5h7.5l-3.8 4z" fill="#f2f2f2"/>
<text x="1220.0" y="65" textLength="40.7" lengthAdjust="spacingAndGlyphs">ByLayer</text>
<text x="1251.0" y="88" textLength="42.0" lengthAdjust="spacingAndGlyphs">ByLayer</text>
<text x="1251.0" y="112" textLength="42.0" lengthAdjust="spacingAndGlyphs">ByLayer</text>
<rect x="1194" y="53" width="15" height="15" fill="#ff0000" stroke="#ddd" stroke-width="1"/>
<path d="M1185.500 84.300H1249M1185.500 108.300H1249" stroke="#f0f0f0" stroke-width="1.400"/>
<rect x="790" y="54" width="14" height="14" fill="#ff0000" stroke="#111" stroke-width="1.5"/>
<text x="681.0" y="16" textLength="298.0" lengthAdjust="spacingAndGlyphs" fill="#140807" xml:space="preserve">Autodesk AutoCAD 2019&#160;&#160;&#160;&#160;GAMBAR sementara3 (1).dwg</text>
<text x="1553.3" y="17" textLength="35.4" lengthAdjust="spacingAndGlyphs" fill="#f4f4f4">Sign In</text>
</svg>
<div class="abs" style="left:0;top:169px;width:1919px;height:4px;background:#545454"></div>
<svg class="abs" style="left:0;top:140px" width="1919" height="36" viewBox="0 140 1919 36" font-family="Liberation Sans, sans-serif" font-size="12.5" fill="#d8d8d8">
<defs><linearGradient id="tg" x1="0" y1="0" x2="0" y2="1"><stop offset="0" stop-color="#5e5e5e"/><stop offset="1" stop-color="#545454"/></linearGradient><linearGradient id="tga" x1="0" y1="0" x2="0" y2="1"><stop offset="0" stop-color="#7a7a7a"/><stop offset="1" stop-color="#585858"/></linearGradient></defs>
<path d="M13 169.500C21 169.500 22.5 162 24.5 155C26.5 148.500 29 147.500 34 147.500H138Q144 147.500 144 154V169.500z" fill="url(#tg)" stroke="#343434" stroke-width="1"/>
<path d="M137 169.500C145 169.500 146.5 162 148.5 155C150.5 148.500 153 147.500 158 147.500H315Q321 147.500 321 154V169.500z" fill="url(#tg)" stroke="#343434" stroke-width="1"/>
<path d="M314 169.500C322 169.500 323.5 162 325.5 155C327.5 148.500 330 147.500 335 147.500H476.5Q482.5 147.500 482.5 154V169.500z" fill="url(#tg)" stroke="#343434" stroke-width="1"/>
<path d="M475.5 169.500C483.5 169.500 485.0 162 487.0 155C489.0 148.500 491.5 147.500 496.5 147.500H638Q644 147.500 644 154V169.500z" fill="url(#tg)" stroke="#343434" stroke-width="1"/>
<path d="M637 169.500C645 169.500 646.5 162 648.5 155C650.5 148.500 653 147.500 658 147.500H783.5Q789.5 147.500 789.5 154V169.500z" fill="url(#tg)" stroke="#343434" stroke-width="1"/>
<path d="M782.5 169.500C790.5 169.500 792.0 162 794.0 155C796.0 148.500 798.5 147.500 803.5 147.500H911.5Q917.5 147.500 917.5 154V169.500z" fill="url(#tg)" stroke="#343434" stroke-width="1"/>
<path d="M910.5 169.500C918.5 169.500 920.0 162 922.0 155C924.0 148.500 926.5 147.500 931.5 147.500H1034Q1040 147.500 1040 154V169.500z" fill="url(#tg)" stroke="#343434" stroke-width="1"/>
<path d="M1033 169.500C1041 169.500 1042.5 162 1044.5 155C1046.5 148.500 1049 147.500 1054 147.500H1204Q1210 147.500 1210 154V169.500z" fill="url(#tg)" stroke="#343434" stroke-width="1"/>
<path d="M1203 169.500C1211 169.500 1212.5 162 1214.5 155C1216.5 148.500 1219 147.500 1224 147.500H1358Q1364 147.500 1364 154V169.500z" fill="url(#tg)" stroke="#343434" stroke-width="1"/>
<path d="M1357 169.500C1365 169.500 1366.5 162 1368.5 155C1370.5 148.500 1373 147.500 1378 147.500H1533Q1539 147.500 1539 154V169.500z" fill="url(#tg)" stroke="#343434" stroke-width="1"/>
<path d="M1532 169.500C1540 169.500 1541.5 162 1543.5 155C1545.5 148.500 1548 147.500 1553 147.500H1691Q1697 147.500 1697 154V169.500z" fill="url(#tg)" stroke="#343434" stroke-width="1"/>
<path d="M1690 169.500C1698 169.500 1699.5 162 1701.5 155C1703.5 148.500 1706 147.500 1711 147.500H1851C1857 147.500 1859 150 1861 156C1863 163 1865 169.500 1872 169.500z" fill="url(#tga)" stroke="#343434" stroke-width="1"/>
<path d="M1876 157Q1876 151.500 1881.500 151.500H1889Q1897 151.500 1897 160V165.500H1885Q1876 165.500 1876 157z" fill="#575757" stroke="#444" stroke-width=".8"/>
<text x="32.3" y="163" textLength="23.0" lengthAdjust="spacingAndGlyphs" fill="#d6d6d6">Start</text>
<text x="155.3" y="163" textLength="137.4" lengthAdjust="spacingAndGlyphs" fill="#d6d6d6">GAMBAR MEDIS. 3dwg (1)</text>
<path d="M303 155l6 6m0 -6l-6 6" stroke="#2c2c2c" stroke-width="2"/>
<text x="333.3" y="163" textLength="120.0" lengthAdjust="spacingAndGlyphs" fill="#d6d6d6">GAMBAR MEDIS. 3dwg</text>
<path d="M464.3 155l6 6m0 -6l-6 6" stroke="#2c2c2c" stroke-width="2"/>
<text x="494" y="163" textLength="122.0" lengthAdjust="spacingAndGlyphs" fill="#d6d6d6">GAMBAR MUSOLA (1)*</text>
<path d="M626 155l6 6m0 -6l-6 6" stroke="#2c2c2c" stroke-width="2"/>
<text x="656" y="163" textLength="104.7" lengthAdjust="spacingAndGlyphs" fill="#d6d6d6">GAMBAR MUSOLA*</text>
<path d="M771 155l6 6m0 -6l-6 6" stroke="#2c2c2c" stroke-width="2"/>
<text x="801.3" y="163" textLength="87.4" lengthAdjust="spacingAndGlyphs" fill="#d6d6d6">gambar rmh (1)*</text>
<path d="M899.3 155l6 6m0 -6l-6 6" stroke="#2c2c2c" stroke-width="2"/>
<text x="929.3" y="163" textLength="65.0" lengthAdjust="spacingAndGlyphs" fill="#d6d6d6">gambar rmh</text>
<path d="M1022 155l6 6m0 -6l-6 6" stroke="#2c2c2c" stroke-width="2"/>
<text x="1052.3" y="163" textLength="129.0" lengthAdjust="spacingAndGlyphs" fill="#d6d6d6">GAMBAR sementara1 (1)</text>
<path d="M1191.7 155l6 6m0 -6l-6 6" stroke="#2c2c2c" stroke-width="2"/>
<text x="1222" y="163" textLength="112.3" lengthAdjust="spacingAndGlyphs" fill="#d6d6d6">GAMBAR sementara1</text>
<path d="M1345.3 155l6 6m0 -6l-6 6" stroke="#2c2c2c" stroke-width="2"/>
<text x="1375.7" y="163" textLength="134.3" lengthAdjust="spacingAndGlyphs" fill="#d6d6d6">GAMBAR sementara2 (1)*</text>
<path d="M1520.7 155l6 6m0 -6l-6 6" stroke="#2c2c2c" stroke-width="2"/>
<text x="1550.7" y="163" textLength="117.6" lengthAdjust="spacingAndGlyphs" fill="#d6d6d6">GAMBAR sementara2*</text>
<path d="M1679 155l6 6m0 -6l-6 6" stroke="#2c2c2c" stroke-width="2"/>
<text x="1708.6" y="163" textLength="129.2" lengthAdjust="spacingAndGlyphs" fill="#ffffff">GAMBAR sementara3 (1)</text>
<path d="M1848 155l6 6m0 -6l-6 6" stroke="#2c2c2c" stroke-width="2"/>
<path d="M1882 158.500h9M1886.500 154v9" stroke="#e8e8e8" stroke-width="2"/>
<path d="M1902.500 152l3.500 3.500l3.500 -3.500M1902.500 157.500l3.500 3.500l3.500 -3.500" stroke="#b0b0b0" stroke-width="1.800" fill="none"/>
</svg>
<div id="edge" class="abs" style="left:1912px;top:173px;width:7px;height:830px;background:linear-gradient(90deg,#eef3fb 0,#eef3fb 1.500px,#d6e4f5 2.500px)"></div>
<div class="abs" style="left:4px;top:180px;font-size:12.5px;color:#e4e4e4;letter-spacing:-.1px;white-space:nowrap">[&#8722;][Top][2D Wireframe]</div>
<svg class="abs" style="left:1760px;top:175px" width="159" height="460" viewBox="1760 175 159 460" font-family="Liberation Sans, sans-serif">
<path d="M1852 190.500h8M1872.500 187.500h6v6h-6zM1874.500 187.500v-2h6v6h-2M1890.500 183.500l8 8m0 -8l-8 8" stroke="#f2f2f2" stroke-width="1.800" fill="none"/>
<circle cx="1829" cy="279" r="51.700" fill="none" stroke="#6e7680" stroke-opacity=".5" stroke-width="14.200"/>
<rect x="1803" y="253" width="52" height="52" fill="#a6a6a6" fill-opacity=".9"/><rect x="1813" y="263" width="32" height="32" fill="#a8a8a8"/>
<text x="1829" y="284" font-size="12" font-weight="bold" text-anchor="middle" fill="#5a5a5a">TOP</text>
<g font-size="22.500" font-weight="bold" fill="#adadad" text-anchor="middle"><text x="1829" y="231">N</text><text x="1829" y="344.500">S</text><text x="1773" y="287.500">W</text><text x="1886" y="287.500">E</text></g>
<rect x="1805.500" y="367.500" width="47" height="16" rx="3" fill="#909090" fill-opacity=".82" stroke="#9a9a9a" stroke-opacity=".6"/><text x="1809" y="380" font-size="12" fill="#3c3c3c">WCS</text><path d="M1840 373h7l-3.500 4z" fill="#666"/>
<rect x="1876.500" y="409.500" width="32" height="212" rx="5" fill="#7e8389" fill-opacity=".7" stroke="#50565c"/>
<g stroke="#80868c" stroke-width="1.600" fill="none"><circle cx="1892" cy="438" r="10"/><circle cx="1892" cy="438" r="5.500"/><path d="M1882 448h20M1885 490v-14M1889 490v-18M1893 490v-18M1897 490v-14M1883 483l4 8h10l3 -8M1884 500l16 14M1900 500l-16 14M1892 538v22M1884 549c0 6 16 6 16 0c0 -6 -16 -6 -16 0M1881 578h6v5h-6zM1889 578h6v5h-6zM1897 578h6v5h-6zM1881 587h22v15h-22z"/><path d="M1888 590l8 4.500l-8 4.500z" fill="#80868c"/></g>
<path d="M1888 459h7l-3.500 3.500zM1888 523h7l-3.500 3.500zM1888 567h7l-3.500 3.500z" fill="#4a5056"/>
<circle cx="1903" cy="414.500" r="3" fill="none" stroke="#80868c"/><circle cx="1903" cy="617" r="3" fill="none" stroke="#80868c"/>
</svg>
<div class="abs" style="left:643px;top:903px;width:634px;height:30px;background:rgba(96,96,96,.88);border-radius:2px"></div>
<div class="abs" style="left:643px;top:938px;width:60px;height:15px;background:#5e5e5e;border-radius:2px"></div>
<div class="abs" style="left:643px;top:958px;width:60px;height:15px;background:#5e5e5e;border-radius:2px"></div>
<div class="abs" style="left:645.300px;top:904.500px;font:11.670px/15px 'Liberation Mono',monospace;color:#c9c9c9;white-space:pre">Autodesk DWG.  This file is a TrustedDWG last saved by an Autodesk application or Autodesk
licensed application.</div>
<div class="abs" style="left:645.300px;top:939.500px;font:11.670px/15px 'Liberation Mono',monospace;color:#f4f4f4;white-space:pre">Command:</div>
<div class="abs" style="left:645.300px;top:959.500px;font:11.670px/15px 'Liberation Mono',monospace;color:#f4f4f4;white-space:pre">Command:</div>
<div class="abs" style="left:583px;top:977px;width:55px;height:25px;background:#4b4b4b;border:1px solid #2c2c2c;border-radius:3px 0 0 3px"></div>
<div class="abs" style="left:638px;top:977px;width:697px;height:25px;background:rgba(206,206,206,.86);border-radius:0 3px 0 0"></div>
<div class="abs" style="left:673.500px;top:981.500px;font:italic 11.670px/16px 'Liberation Mono',monospace;color:#6e6e6e;white-space:pre">Type a command</div>
<svg class="abs" style="left:583px;top:977px" width="760" height="25" viewBox="583 977 760 25">
<path d="M589.500 982v15M592.500 982v15" stroke="#8a8a8a" stroke-width="1.500" stroke-dasharray="1.500 1.500"/>
<path d="M598.500 985l8 8m0 -8l-8 8" stroke="#e8e8e8" stroke-width="1.800"/>
<path d="M620 984a4 4 0 0 1 5.500 4.500l6 6l-2 2l-6 -6a4 4 0 0 1 -5 -5l3 3l2 -2z" fill="#dcdcdc"/>
<rect x="643.500" y="982.500" width="13" height="13" rx="2" fill="#999" stroke="#555"/><path d="M646 986l3 2.500l-3 2.500M650 992h4" stroke="#333" fill="none" stroke-width="1.200"/>
<path d="M660 987h6l-3 3.500z" fill="#555"/>
<path d="M1324 992.500h9l-4.500 -5.500z" fill="#222"/>
</svg>
<svg class="abs" style="left:0;top:1000px" width="1919" height="32" viewBox="0 1000 1919 32" font-family="Liberation Sans, sans-serif" font-size="12.5" fill="#f0f0f0">
<path d="M132 1002.500C138 1002.500 139 1008 141 1013C143 1019 145 1020 149 1020H193C198 1020 199 1015 201 1010C203 1005 205 1002.500 209 1002.500z" fill="#4e4e4e" stroke="#2d2d2d" stroke-width="1"/>
<path d="M66 1002.500C72 1002.500 73 1008 75 1013C77 1019 79 1020 83 1020H127C132 1020 133 1015 135 1010C137 1005 139 1002.500 143 1002.500z" fill="#4e4e4e" stroke="#2d2d2d" stroke-width="1"/>
<path d="M7.5 1002.500C13.5 1002.500 14.5 1008 16.5 1013C18.5 1019 20.5 1020 24.5 1020H61C66 1020 67 1015 69 1010C71 1005 73 1002.500 77 1002.500z" fill="#606060" stroke="#2d2d2d" stroke-width="1"/>
<path d="M203 1020C207 1020 207 1012 209 1008C210 1005 212 1004.500 214 1004.500H226V1015Q226 1020 221 1020z" fill="#4e4e4e" stroke="#2d2d2d"/>
<path d="M210.500 1012h8M214.500 1008v8" stroke="#d8d8d8" stroke-width="2"/>
<text x="23.600" y="1016" textLength="34.1" lengthAdjust="spacingAndGlyphs" font-weight="bold" fill="#fff">Model</text>
<text x="81" y="1016" textLength="41.3" lengthAdjust="spacingAndGlyphs" fill="#d0d0d0">Layout1</text>
<text x="146.200" y="1016" textLength="41.8" lengthAdjust="spacingAndGlyphs" fill="#d0d0d0">Layout2</text>
<rect x="673.5" y="1004.500" width="179.0" height="25" fill="#4a4a4a" stroke="#696969"/>
<rect x="857.5" y="1004.500" width="44.0" height="25" fill="#4a4a4a" stroke="#696969"/>
<text x="683.800" y="1021" textLength="164" lengthAdjust="spacingAndGlyphs">5811.1934, -8254.6145, 0.0000</text>
<text x="859.600" y="1021" textLength="40" lengthAdjust="spacingAndGlyphs">MODEL</text>
<rect x="905.5" y="1004.500" width="64.0" height="25" fill="#505050" stroke="#696969"/>
<rect x="971.5" y="1004.500" width="152.0" height="25" fill="#505050" stroke="#696969"/>
<rect x="1125.5" y="1004.500" width="63.0" height="25" fill="#505050" stroke="#696969"/>
<rect x="1190.5" y="1004.500" width="22.0" height="25" fill="#505050" stroke="#696969"/>
<rect x="1214.5" y="1004.500" width="24.0" height="25" fill="#505050" stroke="#696969"/>
<rect x="1240.5" y="1004.500" width="22.0" height="25" fill="#505050" stroke="#696969"/>
<rect x="1264.5" y="1004.500" width="39.0" height="25" fill="#505050" stroke="#696969"/>
<rect x="1305.5" y="1004.500" width="103.0" height="25" fill="#505050" stroke="#696969"/>
<rect x="1410.5" y="1004.500" width="145.0" height="25" fill="#505050" stroke="#696969"/>
<rect x="1557.5" y="1004.500" width="44.0" height="25" fill="#505050" stroke="#696969"/>
<rect x="1603.5" y="1004.500" width="20.0" height="25" fill="#505050" stroke="#696969"/>
<rect x="1625.5" y="1004.500" width="97.0" height="25" fill="#505050" stroke="#696969"/>
<rect x="1724.5" y="1004.500" width="24.0" height="25" fill="#505050" stroke="#696969"/>
<rect x="1750.5" y="1004.500" width="39.0" height="25" fill="#505050" stroke="#696969"/>
<rect x="1791.5" y="1004.500" width="23.0" height="25" fill="#505050" stroke="#696969"/>
<rect x="1816.5" y="1004.500" width="26.0" height="25" fill="#505050" stroke="#696969"/>
<rect x="1844.5" y="1004.500" width="22.0" height="25" fill="#505050" stroke="#696969"/>
<rect x="1868.5" y="1004.500" width="49.5" height="25" fill="#505050" stroke="#696969"/>
<rect x="907" y="1006" width="22" height="23" fill="#5a8ec8"/>
<rect x="998" y="1006" width="22" height="23" fill="#5a8ec8"/>
<rect x="1023" y="1006" width="22" height="23" fill="#5a8ec8"/>
<rect x="1126" y="1006" width="22" height="23" fill="#5a8ec8"/>
<rect x="1150.2" y="1006" width="21.799999999999955" height="23" fill="#5a8ec8"/>
<rect x="1215" y="1006" width="22" height="23" fill="#5a8ec8"/>
<rect x="1307.2" y="1006" width="22.0" height="23" fill="#5a8ec8"/>
<rect x="1370" y="1006" width="22" height="23" fill="#5a8ec8"/>
<rect x="1412" y="1006" width="22.200000000000045" height="23" fill="#5a8ec8"/>
<rect x="1819" y="1006" width="22" height="23" fill="#5a8ec8"/>
<path d="M958.5 1015.500h7l-3.500 4z" fill="#f0f0f0"/>
<path d="M1073.8 1015.500h7l-3.500 4z" fill="#f0f0f0"/>
<path d="M1112.7 1015.500h7l-3.500 4z" fill="#f0f0f0"/>
<path d="M1177.1 1015.500h7l-3.500 4z" fill="#f0f0f0"/>
<path d="M1292.2 1015.500h7l-3.500 4z" fill="#f0f0f0"/>
<path d="M1358.2 1015.500h7l-3.500 4z" fill="#f0f0f0"/>
<path d="M1396.8 1015.500h7l-3.500 4z" fill="#f0f0f0"/>
<path d="M1545.2 1015.500h7l-3.500 4z" fill="#f0f0f0"/>
<path d="M1587.0 1015.500h7l-3.500 4z" fill="#f0f0f0"/>
<path d="M1711.8 1015.500h7l-3.500 4z" fill="#f0f0f0"/>
<path d="M1778.8 1015.500h7l-3.500 4z" fill="#f0f0f0"/>
<text x="1488.300" y="1021" textLength="52.7" lengthAdjust="spacingAndGlyphs">1:1 / 100%</text>
<text x="1655.700" y="1021" textLength="43.3" lengthAdjust="spacingAndGlyphs">Decimal</text>
<path d="M914 1009.500v16M921.500 1009.500v16M909.500 1014h17M909.500 1021h17" stroke="#f2f2f2" stroke-width="1.400"/>
<rect x="936" y="1011" width="2" height="2" fill="#f2f2f2"/>
<rect x="936" y="1016.5" width="2" height="2" fill="#f2f2f2"/>
<rect x="936" y="1022" width="2" height="2" fill="#f2f2f2"/>
<rect x="941.5" y="1011" width="2" height="2" fill="#f2f2f2"/>
<rect x="941.5" y="1016.5" width="2" height="2" fill="#f2f2f2"/>
<rect x="941.5" y="1022" width="2" height="2" fill="#f2f2f2"/>
<rect x="947" y="1011" width="2" height="2" fill="#f2f2f2"/>
<rect x="947" y="1016.5" width="2" height="2" fill="#f2f2f2"/>
<rect x="947" y="1022" width="2" height="2" fill="#f2f2f2"/>
<rect x="976.500" y="1019" width="6.500" height="6.500" fill="#dcdcdc"/><path d="M983 1019v-9.500h7.500v6h-7.500" stroke="#f2f2f2" stroke-width="1.400" fill="none"/>
<path d="M1000.500 1014.500h8M1004.500 1010.500v8" stroke="#f2f2f2" stroke-width="1.500"/><rect x="1007.500" y="1019.500" width="10" height="4.500" fill="#f2f2f2"/>
<path d="M1027.500 1008.500v16h15M1027.500 1020h4.500v4.500" stroke="#f2f2f2" stroke-width="1.500" fill="none"/>
<circle cx="1057" cy="1017.500" r="6.500" fill="none" stroke="#f2f2f2" stroke-width="1.400"/><path d="M1057 1017.500h8.500M1057 1017.500l6.500 -8" stroke="#f2f2f2" stroke-width="1.300"/>
<path d="M1096.300 1009v16" stroke="#58d060" stroke-width="1.400"/><path d="M1090 1010l12.500 13" stroke="#e0703a" stroke-width="1.400"/><rect x="1095" y="1015.300" width="2.600" height="2.600" fill="#4a4a4a" stroke="#f2f2f2" stroke-width=".9"/>
<path d="M1129 1023h16M1129 1023l14.500 -12" stroke="#f2f2f2" stroke-width="1.500" fill="none"/><rect x="1134.500" y="1015" width="3.500" height="3.500" fill="#f2f2f2"/>
<rect x="1155.500" y="1011.500" width="13.500" height="13" fill="none" stroke="#f2f2f2" stroke-width="1.500"/><rect x="1153.500" y="1009.500" width="4" height="4" fill="#5a8ec8" stroke="#f2f2f2" stroke-width="1.200"/>
<path d="M1193.500 1011h15M1193.500 1014.500h9" stroke="#f2f2f2" stroke-width="1.400"/><path d="M1193.500 1018h13" stroke="#f2f2f2" stroke-width="2"/><path d="M1193.500 1022.500h7" stroke="#f2f2f2" stroke-width="3"/>
<rect x="1218.500" y="1009.500" width="15.500" height="15.500" fill="none" stroke="#f2f2f2" stroke-width="1.300"/>
<rect x="1219.5" y="1010.5" width="3.400" height="3.400" fill="#f2f2f2"/>
<rect x="1219.5" y="1017.3" width="3.400" height="3.400" fill="#f2f2f2"/>
<rect x="1222.9" y="1013.9" width="3.400" height="3.400" fill="#f2f2f2"/>
<rect x="1222.9" y="1020.7" width="3.400" height="3.400" fill="#f2f2f2"/>
<rect x="1226.3" y="1010.5" width="3.400" height="3.400" fill="#f2f2f2"/>
<rect x="1226.3" y="1017.3" width="3.400" height="3.400" fill="#f2f2f2"/>
<rect x="1229.7" y="1013.9" width="3.400" height="3.400" fill="#f2f2f2"/>
<rect x="1229.7" y="1020.7" width="3.400" height="3.400" fill="#f2f2f2"/>
<rect x="1249" y="1014" width="10" height="10.500" fill="#7fd892"/><path d="M1243.500 1011.500h6M1246.500 1008.500v6M1248 1013v11.500" stroke="#f2f2f2" stroke-width="1.300" fill="none"/>
<path d="M1271 1013.500h9v8.500h-9zM1271 1013.500l4 -4h9l-4 4M1284 1009.500v8.500l-4 4" stroke="#f2f2f2" stroke-width="1.300" fill="none"/><rect x="1268" y="1020.500" width="3.500" height="3.500" fill="none" stroke="#f0b050" stroke-width="1.200"/>
<path d="M1312.500 1008.500v15h14M1310 1011l2.500 -3l2.500 3M1324 1021l3 2.500l-3 2.500" stroke="#f2f2f2" stroke-width="1.500" fill="none"/><path d="M1321 1010l-3.500 4.500h2.500l-1.500 4l4.500 -5.500h-2.500l1.500 -3z" fill="#f2f2f2"/>
<path d="M1337 1014h9.500v9h-9.500zM1337 1014l3.500 -3.500h9.500l-3.500 3.500M1350 1010.500v9l-3.500 3.500" stroke="#f2f2f2" stroke-width="1.200" fill="none" stroke-dasharray="3 1.200"/>
<rect x="1335.8" y="1012.8" width="2.600" height="2.600" fill="#6ec0ff"/>
<rect x="1345.3" y="1012.8" width="2.600" height="2.600" fill="#6ec0ff"/>
<rect x="1335.8" y="1021.8" width="2.600" height="2.600" fill="#6ec0ff"/>
<rect x="1345.3" y="1021.8" width="2.600" height="2.600" fill="#6ec0ff"/>
<path d="M1381 1010l6.500 3.500v7.500l-6.500 3.500l-6.500 -3.500v-7.500zM1381 1017.500v-7.500M1381 1017.500l-6.500 3.500M1381 1017.500l6.500 3.500" stroke="#f2f2f2" stroke-width="1.200" fill="none"/><circle cx="1381" cy="1010" r="1.300" fill="#f2f2f2"/><circle cx="1374.500" cy="1021" r="1.300" fill="#f2f2f2"/><circle cx="1387.500" cy="1021" r="1.300" fill="#f2f2f2"/>
<path d="M1421 1009.500l2.500 9l4.500 5.500l-7 -3l-7 3l4.500 -5.500z" fill="#fff"/>
<circle cx="1429" cy="1011.500" r="2.300" fill="none" stroke="#fff" stroke-width="1.100"/>
<path d="M1445 1009.500l2.500 9l4.500 5.500l-7 -3l-7 3l4.500 -5.500z" fill="#d0d0d0"/>
<path d="M1452.500 1008.500l-2.500 3.500h2l-1 3l3.500 -4.500h-2l1 -2z" fill="#e8e8e8"/>
<path d="M1470.8 1009.500l2.500 9l4.500 5.500l-7 -3l-7 3l4.500 -5.500z" fill="#d0d0d0"/>
<rect x="1568.8" y="1009.0" width="4" height="4.500" transform="rotate(0 1570.800 1017.500)" fill="#e0e0e0"/><rect x="1568.8" y="1009.0" width="4" height="4.500" transform="rotate(45 1570.800 1017.500)" fill="#e0e0e0"/><rect x="1568.8" y="1009.0" width="4" height="4.500" transform="rotate(90 1570.800 1017.500)" fill="#e0e0e0"/><rect x="1568.8" y="1009.0" width="4" height="4.500" transform="rotate(135 1570.800 1017.500)" fill="#e0e0e0"/><rect x="1568.8" y="1009.0" width="4" height="4.500" transform="rotate(180 1570.800 1017.500)" fill="#e0e0e0"/><rect x="1568.8" y="1009.0" width="4" height="4.500" transform="rotate(225 1570.800 1017.500)" fill="#e0e0e0"/><rect x="1568.8" y="1009.0" width="4" height="4.500" transform="rotate(270 1570.800 1017.500)" fill="#e0e0e0"/><rect x="1568.8" y="1009.0" width="4" height="4.500" transform="rotate(315 1570.800 1017.500)" fill="#e0e0e0"/><circle cx="1570.800" cy="1017.500" r="5" fill="none" stroke="#e0e0e0" stroke-width="3.200"/>
<path d="M1603 1017.500h16.500M1611.200 1009.500v16" stroke="#f2f2f2" stroke-width="1.600"/>
<rect x="1634" y="1009.200" width="8" height="16" fill="#dedede"/><path d="M1638 1011.500h4M1639.500 1014h2.500M1638 1016.500h4M1639.500 1019h2.500M1638 1021.500h4" stroke="#4a4a4a" stroke-width="1.100"/>
<rect x="1730.300" y="1009.500" width="11.500" height="15.500" fill="none" stroke="#f2f2f2" stroke-width="1.300"/><path d="M1730.300 1012.500h11.500" stroke="#f2f2f2" stroke-width="1.500"/><path d="M1732.500 1016h1.500M1735.500 1016h4.500M1732.500 1019h1.500M1735.500 1019h4.500M1732.500 1022h1.500M1735.500 1022h4.500" stroke="#f2f2f2" stroke-width="1.200"/>
<path d="M1762 1021.500h-6.500v-11.500h13.500v6" stroke="#f2f2f2" stroke-width="1.400" fill="none"/><path d="M1755.500 1011.500h13.500" stroke="#f2f2f2" stroke-width="2"/><rect x="1762.500" y="1019.500" width="7" height="5.500" fill="#f2f2f2"/><path d="M1767.500 1019.500v-1.500a2 2 0 0 1 4 0v.800" stroke="#f2f2f2" stroke-width="1.200" fill="none"/>
<rect x="1795.500" y="1010" width="5.500" height="5.500" fill="none" stroke="#f2f2f2" stroke-width="1.200"/><circle cx="1807.500" cy="1015.500" r="3" fill="none" stroke="#f2f2f2" stroke-width="1.200"/><path d="M1801.500 1018.500l3 6h-6z" fill="none" stroke="#f2f2f2" stroke-width="1.200"/>
<circle cx="1829.800" cy="1017" r="7.500" fill="#6f9bd0" stroke="#e8e8e8" stroke-width="1.600"/><path d="M1825 1021.500l9 -8" stroke="#e8e8e8" stroke-width="2.200"/>
<path d="M1849 1010h10l3 3v5h-13z" fill="#5ab0f0"/><path d="M1859 1010v3h3z" fill="#e8e8e8"/><rect x="1849" y="1018" width="8" height="5" fill="#e8d44a"/><path d="M1853 1010v9M1849 1015.500h9" stroke="#fff" stroke-width="1"/><circle cx="1853" cy="1015.500" r="1.500" fill="none" stroke="#fff" stroke-width=".9"/><path d="M1857.500 1021l2.500 3l4.500 -5" stroke="#3fae4a" stroke-width="2" fill="none"/>
<rect x="1874.500" y="1011" width="15.500" height="12" fill="none" stroke="#f2f2f2" stroke-width="1.300"/><path d="M1877 1020.500l3.500 -3M1877 1017.500v3h3M1887.500 1013.500l-3.500 3M1884.500 1013.500h3v3" stroke="#f2f2f2" stroke-width="1.100" fill="none"/>
<path d="M1898 1011.500h16M1898 1017h16M1898 1022.500h16" stroke="#f2f2f2" stroke-width="2"/>
</svg>
</body>
</html>
